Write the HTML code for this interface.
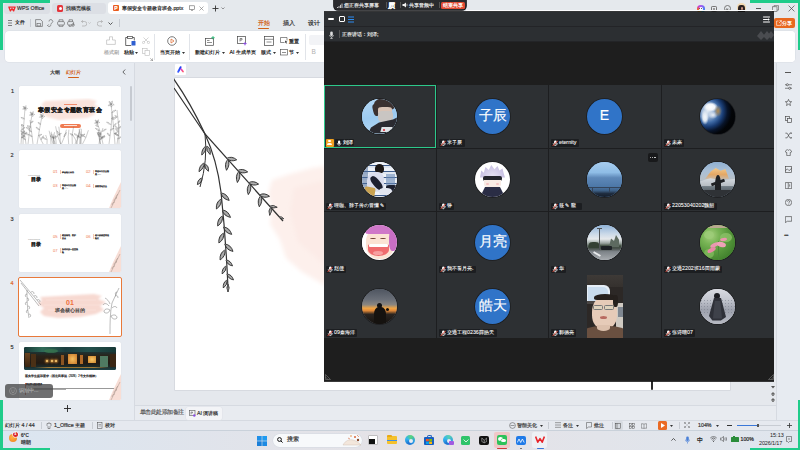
<!DOCTYPE html>
<html><head><meta charset="utf-8">
<style>
*{margin:0;padding:0;box-sizing:border-box}
html,body{width:800px;height:450px;overflow:hidden;background:#e7eaf0;font-family:"Liberation Sans",sans-serif;color:#333}
.a{position:absolute}
.t{position:absolute;white-space:nowrap;line-height:1;-webkit-text-stroke-width:0.18px}
</style></head><body>
<!-- title bar -->
<div class="a" style="left:0;top:0;width:800px;height:31px;background:#e5e9ed"></div>
<!-- ribbon panel -->
<div class="a" style="left:5px;top:31px;width:790px;height:31px;background:#fff;border-radius:4px;box-shadow:0 0 0 0.6px #d9dde4"></div>
<!-- left panel -->
<div class="a" style="left:0;top:63px;width:135px;height:357px;background:#e7ebf1;border-right:1px solid #d6dae1"></div>
<!-- canvas -->
<div class="a" style="left:135px;top:63px;width:641px;height:342px;background:#e5e8ed"></div>
<!-- slide -->
<div class="a" style="left:174.5px;top:77.5px;width:555.5px;height:312.5px;background:#fff;box-shadow:0 0 0 0.6px #cdd1d8"></div>
<!-- notes -->
<div class="a" style="left:135px;top:405px;width:641px;height:15px;background:#e8ebf0;border-top:1px solid #d6dae1"></div>
<!-- right sidebar -->
<div class="a" style="left:776px;top:63px;width:24px;height:357px;background:#e7ebf1;border-left:1px solid #d6dae1"></div>
<!-- status bar -->
<div class="a" style="left:0;top:420px;width:800px;height:10px;background:#e6e9ef;border-top:1px solid #d6dae1"></div>
<!-- taskbar -->
<div class="a" style="left:0;top:430px;width:800px;height:20px;background:linear-gradient(90deg,#dbe6f1,#e5e2e6 50%,#dfe6ee);border-top:1px solid #c9d1da"></div>
<!-- ===== title bar ===== -->
<div class="a" style="left:4px;top:3px;width:46px;height:11px;background:#dcdfe5;border-radius:3px"></div>
<svg class="a" style="left:7.7px;top:5.5px" width="8" height="6" viewBox="0 0 8 6"><path d="M0.9 1.1 L2.4 4.9 L4 2.6 L5.6 4.9 L7.1 1.1 M0.9 1.1 H7.1" fill="none" stroke="#f0282a" stroke-width="1.35" stroke-linejoin="round" stroke-linecap="round"/></svg>
<div class="t" style="left:17px;top:6px;font-size:5.3px;color:#333">WPS Office</div>
<div class="a" style="left:52px;top:3px;width:54px;height:11px;background:#dcdfe5;border-radius:3px"></div>
<div class="a" style="left:57px;top:5px;width:6px;height:7px;background:#e5343a;border-radius:1.5px"></div>
<div class="a" style="left:58.5px;top:7px;width:3px;height:3px;background:#fff;border-radius:50%"></div>
<div class="t" style="left:66px;top:6px;font-size:5px;color:#333">找稿壳模板</div>
<div class="a" style="left:108px;top:2px;width:100px;height:12px;background:#fff;border-radius:3px"></div>
<div class="a" style="left:113px;top:5px;width:6px;height:6px;background:#ea5b1e;border-radius:1px"></div>
<div class="t" style="left:114.3px;top:5.8px;font-size:5px;color:#fff;font-weight:bold">P</div>
<div class="t" style="left:122px;top:6px;font-size:5.2px;color:#222">寒假安全专题教育班会.pptx</div>
<svg class="a" style="left:189px;top:5px" width="6" height="6" viewBox="0 0 6 6"><rect x="0.5" y="0.8" width="5" height="3.6" fill="none" stroke="#666" stroke-width="0.6"/><path d="M2 5.4h2" stroke="#666" stroke-width="0.6"/></svg>
<svg class="a" style="left:199px;top:5.5px" width="5" height="5" viewBox="0 0 5 5"><path d="M0.5 0.5L4.5 4.5M4.5 0.5L0.5 4.5" stroke="#777" stroke-width="0.6"/></svg>
<svg class="a" style="left:212px;top:5px" width="7" height="7" viewBox="0 0 7 7"><path d="M3.5 0.5v6M0.5 3.5h6" stroke="#333" stroke-width="0.9"/></svg>
<svg class="a" style="left:221px;top:7px" width="4" height="3" viewBox="0 0 4 3"><path d="M0.5 0.5L2 2L3.5 0.5" fill="none" stroke="#555" stroke-width="0.6"/></svg>
<!-- right title icons -->
<div class="a" style="left:697px;top:5px;width:7.5px;height:7.5px;border-radius:50%;background:conic-gradient(#a35cf0,#4a7cf5 25%,#38c0e0 40%,#f5b02a 60%,#f05a3a 75%,#c040e0 90%,#a35cf0)"></div>
<div class="a" style="left:698.5px;top:6.5px;width:4.5px;height:4.5px;border-radius:50%;background:#fff"></div>
<div class="a" style="left:699.3px;top:8.2px;width:1.1px;height:1.1px;border-radius:50%;background:#333"></div>
<div class="a" style="left:701.3px;top:8.2px;width:1.1px;height:1.1px;border-radius:50%;background:#333"></div>
<div class="a" style="left:710.5px;top:5.5px;width:6px;height:6.5px;border:0.9px solid #777;border-radius:1.2px"></div>
<div class="a" style="left:712.5px;top:7.5px;width:2px;height:2.5px;background:#999"></div>
<div class="a" style="left:724px;top:5px;width:7px;height:7px;border:0.9px solid #777;border-radius:50%"></div>
<div class="a" style="left:726.3px;top:7.5px;width:2.4px;height:1.5px;border-bottom:0.7px solid #777;border-left:0.7px solid #777;transform:rotate(-45deg)"></div>
<div class="a" style="left:736.5px;top:3px;width:9.5px;height:9.5px;border-radius:50%;background:#f3d9b0"></div>
<div class="a" style="left:738px;top:5px;width:6.5px;height:7.5px;border-radius:45% 45% 20% 20%;background:#2a2020"></div>
<div class="a" style="left:740.5px;top:6.5px;width:2.5px;height:3px;border-radius:50%;background:#c89080"></div>
<div class="a" style="left:756px;top:8px;width:5px;height:0.7px;background:#555"></div>
<svg class="a" style="left:772px;top:5px" width="7" height="7" viewBox="0 0 7 7"><rect x="0.5" y="1.8" width="4.5" height="4.5" fill="none" stroke="#555" stroke-width="0.6"/><path d="M2 1.8V0.6h4.5v4.5H5" fill="none" stroke="#555" stroke-width="0.6"/></svg>
<svg class="a" style="left:788px;top:5px" width="7" height="7" viewBox="0 0 7 7"><path d="M0.6 0.6L6.4 6.4M6.4 0.6L0.6 6.4" stroke="#444" stroke-width="0.7"/></svg>

<!-- ===== quick toolbar ===== -->
<svg class="a" style="left:8px;top:20px" width="4" height="6" viewBox="0 0 4 6"><path d="M0 0.5h4M0 3h4M0 5.5h4" stroke="#333" stroke-width="0.6"/></svg>
<div class="t" style="left:15px;top:20px;font-size:5.4px;color:#222">文件</div>
<div class="a" style="left:30px;top:19px;width:0.6px;height:8px;background:#c8ccd3"></div>
<svg class="a" style="left:35px;top:19px" width="8" height="8" viewBox="0 0 8 8"><path d="M0.6 0.6h5l1.8 1.8v5h-6.8z" fill="none" stroke="#555" stroke-width="0.6"/><rect x="2" y="4.5" width="3.5" height="2.5" fill="none" stroke="#555" stroke-width="0.55"/></svg>
<svg class="a" style="left:46px;top:19px" width="8" height="8" viewBox="0 0 8 8"><path d="M2.5 5.5L1 7M3 2.5a1.8 1.8 0 0 1 3-1.5 1.8 1.8 0 0 1 0 2.8L4.5 5.3M5 5.5a1.8 1.8 0 0 1-3 1.5" fill="none" stroke="#555" stroke-width="0.6"/></svg>
<svg class="a" style="left:57px;top:19px" width="8" height="8" viewBox="0 0 8 8"><rect x="0.6" y="2.6" width="6.8" height="3.4" rx="1" fill="none" stroke="#555" stroke-width="0.6"/><path d="M2 2.6V0.8h4v1.8M2 6v1.3h4V6" fill="none" stroke="#555" stroke-width="0.6"/></svg>
<svg class="a" style="left:67px;top:19px" width="8" height="8" viewBox="0 0 8 8"><rect x="0.6" y="2.6" width="6" height="3.4" rx="1" fill="none" stroke="#555" stroke-width="0.6"/><path d="M2 2.6V0.8h3.5v1.8M2 6v1.3h2.5" fill="none" stroke="#555" stroke-width="0.6"/><circle cx="6" cy="6" r="1.3" fill="none" stroke="#555" stroke-width="0.55"/></svg>
<svg class="a" style="left:80px;top:19.5px" width="7" height="7" viewBox="0 0 7 7"><path d="M1.5 1.5h3a2 2 0 0 1 0 4.5H2M1.5 1.5L3 0.3M1.5 1.5L3 2.8" fill="none" stroke="#aaa" stroke-width="0.7"/></svg>
<svg class="a" style="left:88px;top:22px" width="3" height="2" viewBox="0 0 3 2"><path d="M0.3 0.3L1.5 1.6L2.7 0.3" fill="none" stroke="#aaa" stroke-width="0.5"/></svg>
<svg class="a" style="left:97px;top:19.5px" width="7" height="7" viewBox="0 0 7 7"><path d="M5.5 1.5h-3a2 2 0 0 0 0 4.5H5M5.5 1.5L4 0.3M5.5 1.5L4 2.8" fill="none" stroke="#aaa" stroke-width="0.7"/></svg>
<svg class="a" style="left:108px;top:21.5px" width="5" height="3" viewBox="0 0 5 3"><path d="M0.5 0.5L2.5 2.5L4.5 0.5" fill="none" stroke="#333" stroke-width="0.8"/></svg>
<div class="a" style="left:119px;top:19px;width:0.6px;height:8px;background:#c8ccd3"></div>

<!-- ribbon tabs -->
<div class="t" style="left:258px;top:20.5px;font-size:5.5px;color:#d2601a">开始</div>
<div class="a" style="left:258px;top:27.5px;width:11px;height:1.2px;background:#d2601a;border-radius:1px"></div>
<div class="t" style="left:282.5px;top:20.5px;font-size:5.5px;color:#333">插入</div>
<div class="t" style="left:307.5px;top:20.5px;font-size:5.5px;color:#333">设计</div>

<!-- ===== ribbon content ===== -->
<svg class="a" style="left:106px;top:36px" width="10" height="9" viewBox="0 0 10 9"><path d="M3.5 4V0.8h3V4h2.8v4.4H0.6V4z" fill="none" stroke="#bbb" stroke-width="0.7"/></svg>
<div class="t" style="left:104px;top:49.5px;font-size:5.3px;color:#aaa">格式刷</div>
<svg class="a" style="left:125px;top:36px" width="11" height="10" viewBox="0 0 11 10"><path d="M2.5 1.5H0.7v8h5.5M7.5 1.5h1.8v3" fill="none" stroke="#444" stroke-width="0.8"/><rect x="2.5" y="0.5" width="5" height="2" fill="none" stroke="#444" stroke-width="0.7"/><rect x="6.5" y="5" width="4" height="4.5" rx="0.5" fill="#2f5fd0"/></svg>
<div class="t" style="left:124px;top:49.5px;font-size:5.3px;color:#222">粘贴</div>
<svg class="a" style="left:134.5px;top:51.5px" width="3" height="2" viewBox="0 0 3 2"><path d="M0 0h3L1.5 2z" fill="#333"/></svg>
<svg class="a" style="left:142px;top:37px" width="8" height="7" viewBox="0 0 8 7"><path d="M1.5 0.5L6 5M6.5 0.5L2 5" stroke="#bbb" stroke-width="0.6"/><circle cx="1.5" cy="5.5" r="1.1" fill="none" stroke="#bbb" stroke-width="0.6"/><circle cx="6.5" cy="5.5" r="1.1" fill="none" stroke="#bbb" stroke-width="0.6"/></svg>
<svg class="a" style="left:142px;top:48px" width="8" height="8" viewBox="0 0 8 8"><rect x="0.6" y="0.6" width="4.5" height="5" fill="none" stroke="#bbb" stroke-width="0.6"/><rect x="3" y="2.5" width="4.4" height="5" fill="#fff" stroke="#bbb" stroke-width="0.6"/></svg>
<svg class="a" style="left:150px;top:58px" width="3" height="3" viewBox="0 0 3 3"><path d="M0.3 0.3L2.7 2.7M2.7 0.3V2.7H0.3" fill="none" stroke="#666" stroke-width="0.5"/></svg>
<div class="a" style="left:154px;top:34px;width:0.6px;height:26px;background:#e1e4e9"></div>
<svg class="a" style="left:167px;top:36px" width="10" height="10" viewBox="0 0 10 10"><circle cx="5" cy="5" r="4.3" fill="none" stroke="#444" stroke-width="0.7"/><path d="M4 3v4l3-2z" fill="none" stroke="#e0662a" stroke-width="0.7"/></svg>
<div class="t" style="left:160px;top:49.5px;font-size:5.3px;color:#222">当页开始</div>
<svg class="a" style="left:181.5px;top:51.5px" width="3" height="2" viewBox="0 0 3 2"><path d="M0 0h3L1.5 2z" fill="#333"/></svg>
<div class="a" style="left:189px;top:34px;width:0.6px;height:26px;background:#e1e4e9"></div>
<svg class="a" style="left:205px;top:36px" width="10" height="10" viewBox="0 0 10 10"><rect x="0.6" y="2.5" width="8" height="6.8" fill="none" stroke="#444" stroke-width="0.7"/><path d="M2 6.5h5M2 4.5h2.5" stroke="#444" stroke-width="0.6"/><path d="M8 0v3.4M6.3 1.7h3.4" stroke="#1bb36b" stroke-width="0.8"/></svg>
<div class="t" style="left:195px;top:49.5px;font-size:5.3px;color:#222">新建幻灯片</div>
<svg class="a" style="left:221.5px;top:51.5px" width="3" height="2" viewBox="0 0 3 2"><path d="M0 0h3L1.5 2z" fill="#333"/></svg>
<svg class="a" style="left:237px;top:36px" width="11" height="10" viewBox="0 0 11 10"><rect x="0.6" y="0.6" width="8" height="7" fill="none" stroke="#444" stroke-width="0.7"/><path d="M3 2.5v3M3 2.5h2v1.5H3" fill="none" stroke="#444" stroke-width="0.6"/><path d="M8 5.5l0.6 1.6 1.6 0.6-1.6 0.6L8 10 7.4 8.3 5.8 7.7l1.6-0.6z" fill="#8b4fe0"/></svg>
<div class="t" style="left:229.5px;top:49.5px;font-size:5.3px;color:#222">AI 生成单页</div>
<svg class="a" style="left:263.5px;top:36px" width="10" height="10" viewBox="0 0 10 10"><rect x="0.6" y="0.6" width="8.8" height="8.8" fill="none" stroke="#444" stroke-width="0.7"/><path d="M0.6 3.3h8.8M2.5 6h5" stroke="#444" stroke-width="0.6"/></svg>
<div class="t" style="left:261px;top:49.5px;font-size:5.3px;color:#222">版式</div>
<svg class="a" style="left:272.5px;top:51.5px" width="3" height="2" viewBox="0 0 3 2"><path d="M0 0h3L1.5 2z" fill="#333"/></svg>
<svg class="a" style="left:280px;top:37px" width="8" height="7" viewBox="0 0 8 7"><path d="M4.5 5.5H0.5v-5h6.5v3" fill="none" stroke="#444" stroke-width="0.6"/><path d="M5 3.5l2.5 1.2-1.1 0.4 0.8 1.3-0.5 0.3-0.8-1.3-0.8 0.8z" fill="#444"/></svg>
<div class="t" style="left:289px;top:38.5px;font-size:5.3px;color:#222">重置</div>
<svg class="a" style="left:280px;top:48.5px" width="8" height="7" viewBox="0 0 8 7"><rect x="0.5" y="0.5" width="7" height="5.5" fill="none" stroke="#444" stroke-width="0.6"/><path d="M2 3.5h4" stroke="#444" stroke-width="0.6"/></svg>
<div class="t" style="left:289px;top:49.5px;font-size:5.3px;color:#222">节</div>
<svg class="a" style="left:296px;top:51.5px" width="3" height="2" viewBox="0 0 3 2"><path d="M0 0h3L1.5 2z" fill="#333"/></svg>
<div class="a" style="left:305px;top:34px;width:0.6px;height:26px;background:#e1e4e9"></div>
<div class="a" style="left:309px;top:35px;width:30px;height:10px;background:#f2f3f6;border-radius:2px"></div>
<div class="t" style="left:311.5px;top:49px;font-size:6.5px;color:#b0b0b0;-webkit-text-stroke-width:0">B</div>

<!-- right: share button & panel -->
<div class="a" style="left:774px;top:18px;width:20.5px;height:9.5px;background:#e8681f;border-radius:2px"></div>
<svg class="a" style="left:775.5px;top:20px" width="6" height="6" viewBox="0 0 6 6"><path d="M2.5 1H0.6v4.4h4.4V3.5M3 3L5.4 0.6M3.5 0.6h1.9v1.9" fill="none" stroke="#fff" stroke-width="0.6"/></svg>
<div class="t" style="left:782px;top:20.5px;font-size:5.3px;color:#fff">分享</div>
<!-- ===== left panel ===== -->
<div class="t" style="left:50px;top:69.5px;font-size:5.3px;color:#333">大纲</div>
<div class="t" style="left:66px;top:69.5px;font-size:5.3px;color:#d2601a">幻灯片</div>
<div class="a" style="left:68px;top:76.5px;width:10.5px;height:1.2px;background:#d2601a;border-radius:1px"></div>
<svg class="a" style="left:122px;top:69px" width="4" height="6" viewBox="0 0 4 6"><path d="M3.2 0.5L0.9 3L3.2 5.5" fill="none" stroke="#444" stroke-width="0.8"/></svg>
<div class="a" style="left:129.5px;top:86px;width:2px;height:35px;background:#c6cad1;border-radius:1px"></div>
<!-- numbers -->
<div class="t" style="left:11px;top:89px;font-size:5.5px;color:#333">1</div>
<div class="t" style="left:10.5px;top:153px;font-size:5.5px;color:#333">2</div>
<div class="t" style="left:10.5px;top:217px;font-size:5.5px;color:#333">3</div>
<div class="t" style="left:10.5px;top:281px;font-size:5.5px;color:#e0662a">4</div>
<div class="t" style="left:10.5px;top:345px;font-size:5.5px;color:#333">5</div>

<!-- slide 1 -->
<div class="a" style="left:19px;top:86px;width:102px;height:58px;background:#fff;border-radius:1.5px;overflow:hidden;box-shadow:0 0 1px rgba(0,0,0,0.12)">
  <svg class="a" style="left:20px;top:12px" width="62" height="23" viewBox="0 0 62 23"><defs><filter id="bb1"><feGaussianBlur stdDeviation="0.8"/></filter></defs><path d="M6 3 L50 1 L58 3 L55 6 L60 9 L52 12 L57 16 L48 20 L20 22 L8 19 L3 15 L7 11 L2 7z" fill="#f9e3dc" filter="url(#bb1)"/></svg>
  <div class="a" style="left:45px;top:18px;width:13px;height:1.2px;background:#f08a6a"></div>
  <div class="t" style="left:19px;top:21.2px;font-size:6.4px;font-weight:bold;color:#1a1a1a;letter-spacing:0.4px;font-family:'Liberation Serif',serif">寒假安全专题教育班会</div>
  <div class="a" style="left:41px;top:37.5px;width:21px;height:4.2px;background:#ef7b52;border-radius:2px"></div><div class="a" style="left:45px;top:39.3px;width:13px;height:0.6px;background:#fde0d5"></div>
  <svg class="a" style="left:0;top:0" width="102" height="58" viewBox="0 0 102 58"><path d="M4.0 58.0 Q4.3 40.0 6.0 22.0 M4.6 47.2Q3.9 45.1 1.7 44.8Q2.4 46.9 4.6 47.2 M5.0 40.0Q3.9 38.3 2.0 38.9Q3.1 40.6 5.0 40.0 M5.4 32.8Q4.1 31.0 1.9 31.5Q3.2 33.3 5.4 32.8 M6.0 22.0Q7.1 23.4 8.5 22.5Q7.5 21.1 6.0 22.0M6.0 22.0Q5.3 23.6 6.8 24.4Q7.5 22.9 6.0 22.0M6.0 22.0Q4.3 21.6 3.7 23.2Q5.4 23.6 6.0 22.0M6.0 22.0Q5.7 20.3 4.0 20.4Q4.3 22.1 6.0 22.0M6.0 22.0Q7.5 21.2 6.9 19.6Q5.4 20.4 6.0 22.0 M9.0 58.0 Q10.7 43.0 13.0 28.0 M10.2 49.0Q8.3 47.0 5.6 47.3Q7.5 49.3 10.2 49.0 M11.0 43.0Q9.5 41.2 7.1 41.6Q8.6 43.4 11.0 43.0 M11.8 37.0Q13.8 36.9 14.2 35.0Q12.2 35.1 11.8 37.0 M13.0 28.0Q14.1 29.5 15.7 28.5Q14.6 27.1 13.0 28.0M13.0 28.0Q12.2 29.6 13.7 30.6Q14.5 29.0 13.0 28.0M13.0 28.0Q11.2 27.5 10.6 29.3Q12.4 29.7 13.0 28.0M13.0 28.0Q13.0 26.2 11.1 26.0Q11.2 27.8 13.0 28.0M13.0 28.0Q14.7 27.4 14.3 25.6Q12.6 26.2 13.0 28.0 M14.0 58.0 Q12.7 46.0 11.0 34.0 M13.1 50.8Q12.6 48.9 10.6 48.7Q11.1 50.7 13.1 50.8 M12.5 46.0Q11.8 43.9 9.6 43.6Q10.3 45.7 12.5 46.0 M11.9 41.2Q10.4 39.4 8.0 39.8Q9.5 41.6 11.9 41.2 M2.0 58.0 Q3.0 48.0 3.0 38.0 M2.3 52.0Q4.7 51.5 5.6 49.2Q3.2 49.7 2.3 52.0 M2.5 48.0Q5.0 47.5 6.0 45.1Q3.5 45.6 2.5 48.0 M2.7 44.0Q5.1 43.6 5.9 41.3Q3.5 41.7 2.7 44.0 M18.0 58.0 Q20.3 44.0 23.0 30.0 M19.5 49.6Q21.6 50.1 22.8 48.4Q20.7 47.9 19.5 49.6 M20.5 44.0Q19.6 41.7 17.1 41.2Q18.0 43.5 20.5 44.0 M21.5 38.4Q21.1 36.5 19.1 36.4Q19.5 38.3 21.5 38.4 M23.0 30.0Q24.2 31.5 25.8 30.5Q24.6 29.0 23.0 30.0M23.0 30.0Q22.0 31.6 23.5 32.7Q24.5 31.1 23.0 30.0M23.0 30.0Q21.2 29.5 20.5 31.3Q22.3 31.8 23.0 30.0M23.0 30.0Q23.0 28.1 21.1 27.9Q21.1 29.8 23.0 30.0M23.0 30.0Q24.7 29.1 23.9 27.4Q22.3 28.3 23.0 30.0 M7.0 58.0 Q6.0 51.0 5.0 44.0 M6.4 53.8Q5.4 51.4 2.9 50.9Q3.9 53.3 6.4 53.8 M6.0 51.0Q4.9 48.5 2.3 47.9Q3.4 50.4 6.0 51.0 M5.6 48.2Q7.6 48.1 8.0 46.2Q6.0 46.3 5.6 48.2 M61.4 58.0 Q63.4 50.4 62.3 42.8 M61.9 50.4Q64.5 50.3 66.0 48.0Q63.3 48.2 61.9 50.4 M56.0 58.0 Q59.8 52.3 60.0 46.5 M58.0 52.3Q59.8 51.5 59.6 49.5Q57.7 50.3 58.0 52.3 M63.5 58.0 Q67.7 51.1 69.4 44.2 M66.5 51.1Q64.6 48.7 61.5 48.3Q63.4 50.7 66.5 51.1 M41.5 58.0 Q41.1 49.4 39.8 40.7 M40.6 49.4Q40.4 46.5 38.0 44.8Q38.3 47.7 40.6 49.4 M28.0 58.0 Q28.9 53.5 26.7 49.0 M27.4 53.5Q26.1 51.4 23.7 51.4Q24.9 53.5 27.4 53.5 M37.2 58.0 Q37.0 54.2 36.4 50.4 M81.2 58.0 Q79.4 50.9 79.7 43.8 M80.4 50.9Q80.6 48.7 78.6 47.7Q78.5 49.9 80.4 50.9 M34.5 58.0 Q34.1 52.1 35.5 46.2 M35.0 52.1Q33.6 49.9 31.0 49.8Q32.4 52.0 35.0 52.1 M57.8 58.0 Q57.0 53.1 53.3 48.2 M60.6 58.0 Q61.8 50.6 60.1 43.1 M62.2 58.0 Q61.2 51.6 61.0 45.3 M61.6 51.6Q60.8 49.8 58.8 50.1Q59.6 51.9 61.6 51.6 M24.2 58.0 Q21.5 53.7 20.1 49.5 M22.1 53.7Q24.4 52.3 24.5 49.7Q22.3 51.1 22.1 53.7 M53.3 58.0 Q52.2 49.3 54.6 40.6 M54.0 49.3Q53.1 47.4 51.0 47.6Q51.9 49.5 54.0 49.3 M35.6 58.0 Q33.3 52.9 34.0 47.8 M81.6 58.0 Q79.8 52.2 81.4 46.4 M81.5 52.2Q84.3 51.9 86.0 49.6Q83.1 49.9 81.5 52.2 M49.7 58.0 Q48.6 50.8 49.9 43.7 M42.4 58.0 Q45.9 50.9 47.4 43.7 M44.9 50.9Q47.2 49.3 47.5 46.5Q45.1 48.1 44.9 50.9 M36.2 58.0 Q35.3 52.8 32.2 47.6 M34.2 52.8Q36.9 52.6 38.4 50.3Q35.7 50.5 34.2 52.8 M58.0 58.0 Q58.4 50.3 61.1 42.5 M59.6 50.3Q57.9 47.9 55.0 47.7Q56.7 50.0 59.6 50.3 M34.1 58.0 Q31.3 51.9 32.3 45.8 M33.2 51.9Q35.7 51.8 37.0 49.7Q34.5 49.8 33.2 51.9 M32.0 58.0 Q32.3 51.4 30.1 44.7 M41.7 58.0 Q37.6 49.2 36.6 40.3 M39.2 49.2Q41.3 49.3 42.3 47.3Q40.1 47.2 39.2 49.2 M96.0 58.0 Q94.5 38.0 92.0 18.0 M95.0 48.0Q97.4 48.1 98.4 46.0Q96.1 45.9 95.0 48.0 M94.3 40.8Q96.8 39.9 97.2 37.3Q94.8 38.2 94.3 40.8 M93.6 33.6Q96.2 33.6 97.6 31.3Q94.9 31.3 93.6 33.6 M92.8 26.4Q95.6 26.3 97.0 24.0Q94.3 24.1 92.8 26.4 M92.0 18.0Q93.2 19.9 95.2 18.8Q94.0 17.0 92.0 18.0M92.0 18.0Q90.8 19.8 92.5 21.2Q93.7 19.4 92.0 18.0M92.0 18.0Q89.8 17.6 89.2 19.8Q91.4 20.1 92.0 18.0M92.0 18.0Q92.1 15.8 90.0 15.4Q89.8 17.6 92.0 18.0M92.0 18.0Q94.0 17.1 93.4 15.0Q91.3 15.9 92.0 18.0 M90.0 58.0 Q92.7 42.0 93.0 26.0 M90.8 50.0Q90.5 47.7 88.2 47.0Q88.5 49.3 90.8 50.0 M91.3 44.2Q93.9 44.3 95.1 42.0Q92.6 42.0 91.3 44.2 M91.8 38.5Q90.3 36.1 87.5 36.0Q89.0 38.4 91.8 38.5 M92.4 32.7Q94.4 33.0 95.2 31.1Q93.1 30.8 92.4 32.7 M100.0 58.0 Q100.6 41.0 98.0 24.0 M99.5 49.5Q98.3 47.3 95.8 47.4Q97.0 49.6 99.5 49.5 M99.1 43.4Q98.7 40.9 96.4 40.1Q96.8 42.6 99.1 43.4 M98.8 37.3Q100.8 36.8 100.9 34.7Q98.8 35.2 98.8 37.3 M98.4 31.1Q97.8 29.3 95.8 29.6Q96.5 31.5 98.4 31.1 M84.0 58.0 Q82.2 47.0 78.0 36.0 M82.5 52.5Q84.9 52.6 86.0 50.5Q83.6 50.4 82.5 52.5 M81.4 48.5Q80.4 46.4 78.1 46.6Q79.1 48.7 81.4 48.5 M80.3 44.6Q79.0 42.3 76.3 42.3Q77.7 44.5 80.3 44.6 M79.3 40.6Q78.6 38.7 76.6 39.1Q77.3 41.0 79.3 40.6 M78.0 36.0Q79.1 37.4 80.7 36.5Q79.5 35.0 78.0 36.0M78.0 36.0Q76.8 37.4 78.1 38.7Q79.3 37.3 78.0 36.0M78.0 36.0Q76.2 35.6 75.6 37.3Q77.4 37.7 78.0 36.0M78.0 36.0Q78.0 34.2 76.1 34.0Q76.2 35.8 78.0 36.0M78.0 36.0Q79.8 35.6 79.5 33.8Q77.8 34.2 78.0 36.0 M80.0 58.0 Q80.2 50.0 84.0 42.0 M81.0 54.0Q83.5 53.0 84.1 50.3Q81.5 51.3 81.0 54.0 M81.7 51.1Q81.2 48.5 78.7 47.6Q79.2 50.2 81.7 51.1 M82.4 48.2Q81.3 46.1 78.9 46.2Q80.0 48.3 82.4 48.2 M83.2 45.4Q85.9 45.3 87.3 43.0Q84.6 43.0 83.2 45.4 M98.0 58.0 Q100.1 48.0 100.0 38.0 M98.5 53.0Q101.1 53.0 102.4 50.7Q99.8 50.7 98.5 53.0 M98.9 49.4Q98.1 47.4 96.0 47.7Q96.8 49.7 98.9 49.4 M99.2 45.8Q98.9 43.3 96.5 42.6Q96.9 45.0 99.2 45.8 M99.6 42.2Q102.0 42.3 103.1 40.1Q100.7 40.0 99.6 42.2" fill="none" stroke="#6a6a6a" stroke-width="0.34"/></svg>
</div>

<!-- slide 2 -->
<div class="a" style="left:19px;top:150px;width:102px;height:58px;background:#fff;border-radius:1.5px;overflow:hidden;box-shadow:0 0 1px rgba(0,0,0,0.12)">
  <div class="t" style="left:9px;top:23.5px;font-size:2.2px;color:#999;-webkit-text-stroke-width:0">CONTENTS</div>
  <div class="t" style="left:12px;top:27px;font-size:5px;font-weight:bold;color:#222">目录</div>
  <div class="t" style="left:34px;top:20px;font-size:4.2px;color:#f2906f;-webkit-text-stroke-width:0.05px">01</div>
  <div class="a" style="left:41px;top:20px;width:0.3px;height:4px;background:#f3c5b5"></div>
  <div class="t" style="left:43px;top:21.2px;font-size:2.2px;color:#333">班会核心目的</div>
  <div class="t" style="left:67px;top:20px;font-size:4.2px;color:#f2906f;-webkit-text-stroke-width:0.05px">02</div>
  <div class="a" style="left:74px;top:20px;width:0.3px;height:4px;background:#f3c5b5"></div>
  <div class="t" style="left:76px;top:19.5px;font-size:2.2px;color:#333">寒假出行安全隐</div>
  <div class="t" style="left:76px;top:22.8px;font-size:2.2px;color:#333">患 <span style="color:#aaa">(一)</span></div>
  <div class="t" style="left:34px;top:34px;font-size:4.2px;color:#f2906f;-webkit-text-stroke-width:0.05px">03</div>
  <div class="a" style="left:41px;top:34px;width:0.3px;height:4px;background:#f3c5b5"></div>
  <div class="t" style="left:43px;top:33.5px;font-size:2.2px;color:#333">寒假出行安全隐</div>
  <div class="t" style="left:43px;top:36.8px;font-size:2.2px;color:#333">患 <span style="color:#aaa">(二)</span></div>
  <div class="t" style="left:67px;top:34px;font-size:4.2px;color:#f2906f;-webkit-text-stroke-width:0.05px">04</div>
  <div class="a" style="left:74px;top:34px;width:0.3px;height:4px;background:#f3c5b5"></div>
  <div class="t" style="left:76px;top:35.2px;font-size:2.2px;color:#333">居家用电安全</div>
  <svg class="a" style="left:88px;top:32px" width="14" height="26" viewBox="0 0 14 26"><path d="M14 0 C10 8 6 16 2 26 L14 26z" fill="#f8ded6"/><path d="M13 8 C10 14 7 20 4 26 M10 16 c-2 0-3 1-3 3 M8 20 c-2 0-3 1-3 3 M11 12 c-1 1-2 2-2 4" fill="none" stroke="#8a7a70" stroke-width="0.4"/></svg>
</div>

<!-- slide 3 -->
<div class="a" style="left:19px;top:214px;width:102px;height:58px;background:#fff;border-radius:1.5px;overflow:hidden;box-shadow:0 0 1px rgba(0,0,0,0.12)">
  <div class="t" style="left:9px;top:24px;font-size:2.2px;color:#999;-webkit-text-stroke-width:0">CONTENTS</div>
  <div class="t" style="left:12px;top:27.5px;font-size:5px;font-weight:bold;color:#222">目录</div>
  <div class="t" style="left:34px;top:20.5px;font-size:4.2px;color:#f2906f;-webkit-text-stroke-width:0.05px">05</div>
  <div class="a" style="left:41px;top:20px;width:0.3px;height:4.5px;background:#f3c5b5"></div>
  <div class="t" style="left:43px;top:19.5px;font-size:2.2px;color:#333">燃放烟花、防护</div>
  <div class="t" style="left:43px;top:22.8px;font-size:2.2px;color:#333">要点</div>
  <div class="t" style="left:67px;top:20.5px;font-size:4.2px;color:#f2906f;-webkit-text-stroke-width:0.05px">06</div>
  <div class="a" style="left:74px;top:20px;width:0.3px;height:4.5px;background:#f3c5b5"></div>
  <div class="t" style="left:76px;top:19.5px;font-size:2.2px;color:#333">做不到就远离危</div>
  <div class="t" style="left:76px;top:22.8px;font-size:2.2px;color:#333">险区</div>
  <div class="t" style="left:34px;top:34.5px;font-size:4.2px;color:#f2906f;-webkit-text-stroke-width:0.05px">07</div>
  <div class="a" style="left:41px;top:34px;width:0.3px;height:4.5px;background:#f3c5b5"></div>
  <div class="t" style="left:43px;top:33.5px;font-size:2.2px;color:#333">如何识别一些直接</div>
  <div class="t" style="left:43px;top:36.8px;font-size:2.2px;color:#333">险</div>
  <svg class="a" style="left:88px;top:32px" width="14" height="26" viewBox="0 0 14 26"><path d="M14 0 C10 8 6 16 2 26 L14 26z" fill="#f8ded6"/><path d="M13 8 C10 14 7 20 4 26 M10 16 c-2 0-3 1-3 3 M8 20 c-2 0-3 1-3 3 M11 12 c-1 1-2 2-2 4" fill="none" stroke="#8a7a70" stroke-width="0.4"/></svg>
</div>

<!-- slide 4 (selected) -->
<div class="a" style="left:18px;top:277px;width:104px;height:60px;border:1px solid #e8793a;border-radius:2px;background:#fff;overflow:hidden">
  <svg class="a" style="left:17px;top:14px" width="72" height="28" viewBox="0 0 72 28"><defs><filter id="bb4"><feGaussianBlur stdDeviation="0.9"/></filter></defs><path d="M4 5 L40 3 L58 2 L66 4 L62 7 L70 10 L64 14 L68 18 L60 22 L44 25 L22 26 L8 24 L4 20 L8 16 L2 12 L6 8z" fill="#f7d9d1" filter="url(#bb4)"/><path d="M10 8h50M8 13h56M12 18h48" stroke="#fbe8e3" stroke-width="0.6" opacity="0.7"/></svg>
  <div class="t" style="left:47px;top:20.5px;font-size:7px;font-weight:bold;color:#f0703c;-webkit-text-stroke-width:0">01</div>
  <div class="t" style="left:36px;top:30px;font-size:5.2px;color:#333">班会核心目的</div>
  <svg class="a" style="left:0;top:0" width="102" height="58" viewBox="0 0 102 58" fill="none" stroke="#555" stroke-width="0.4">
    <path d="M1 2 L22 27 M2 5 L20 28"/>
    <path d="M8 12 C8 20 8 30 10 40 M8 16 c-2 0-2 2-1 3 M8 20 c2 0 2 2 1 3 M8 24 c-2 0-2 2-1 3 M9 28 c2 0 2 2 1 3 M9 32 c-2 0-2 2-1 3 M10 36 c2 0 2 2 1 3"/>
    <path d="M12 14 c2-1 3 0 3 2 M15 18 c2-1 3 0 3 2 M18 22 c2-1 3 0 3 2"/>
    <path d="M91 56 C91 45 91 35 93 25 M93 25 L100 10 M96 18 c2-1 3 0 3 2 M98 14 c-2 0-2 2-1 3 M91 32 c-3-2-6-1-6 2 2 2 5 1 6-2z M92 38 c3-2 6-1 6 2-2 2-5 1-6-2z M90 28 c-2-3-5-3-6-1 M86 20 c2 1 4 3 5 6 M93 30 c2-2 4-2 5 0"/>
  </svg>
</div>

<!-- slide 5 -->
<div class="a" style="left:19px;top:342px;width:102px;height:58px;background:#fff;border-radius:1.5px;overflow:hidden;box-shadow:0 0 1px rgba(0,0,0,0.12)">
  <div class="a" style="left:5px;top:5px;width:92px;height:23px;border-radius:1.5px;overflow:hidden;background:linear-gradient(180deg,#132a2c 0,#1a3638 18%,#2a2218 40%,#231a12 70%,#1b2a2a 85%,#1f4448 100%)">
    <div class="a" style="left:0;top:0;width:92px;height:5px;background:linear-gradient(90deg,#173836,#2f6a58 20%,#1b3d3f 45%,#22504c 70%,#173836)"></div>
    <div class="a" style="left:20px;top:2px;width:14px;height:4px;background:#3a7a50;border-radius:50%;opacity:0.7"></div>
    <div class="a" style="left:1px;top:6px;width:5px;height:14px;background:linear-gradient(#6a4420,#3a2410)"></div>
    <div class="a" style="left:7px;top:7px;width:5px;height:13px;background:#4a3016"></div>
    <div class="a" style="left:22px;top:12.5px;width:2px;height:2.5px;background:#ffd27a;border-radius:1px;box-shadow:0 0 2px 1px rgba(255,170,60,0.7)"></div>
    <div class="a" style="left:26.5px;top:12.5px;width:2px;height:2.5px;background:#ffd27a;border-radius:1px;box-shadow:0 0 2px 1px rgba(255,170,60,0.7)"></div>
    <div class="a" style="left:31px;top:12.5px;width:2px;height:2.5px;background:#ffd27a;border-radius:1px;box-shadow:0 0 2px 1px rgba(255,170,60,0.7)"></div>
    <div class="a" style="left:37px;top:8px;width:3px;height:10px;background:#8a5422"></div>
    <div class="a" style="left:44px;top:7px;width:9px;height:10px;background:radial-gradient(#f6c060,#c8782a)"></div>
    <div class="a" style="left:56px;top:8px;width:3px;height:9px;background:#b06a28"></div>
    <div class="a" style="left:64px;top:9px;width:8px;height:7px;background:radial-gradient(#f8c868,#d08830)"></div>
    <div class="a" style="left:76px;top:9px;width:8px;height:11px;background:#4f7a62"></div>
    <div class="a" style="left:86px;top:7px;width:6px;height:13px;background:#3a2614"></div>
    <div class="a" style="left:10px;top:20px;width:75px;height:1.2px;background:linear-gradient(90deg,transparent,#d89a3a 20%,#c88a2a 50%,#d89a3a 80%,transparent);opacity:0.7"></div>
  </div>
  <div class="t" style="left:5.5px;top:34px;font-size:2.6px;color:#333">落实学生提和要求（西北民事说〔2026〕2号文件精神）</div>
  <div class="t" style="left:6.5px;top:41.5px;font-size:2.4px;font-weight:bold;color:#222">学生学习提升要求</div>
  <div class="a" style="left:5.5px;top:41px;width:0.4px;height:12px;background:#c87050"></div>
  <div class="a" style="left:6.5px;top:45.8px;width:90px;height:0.5px;background:#999"></div>
  <div class="a" style="left:6.5px;top:47.2px;width:40px;height:0.5px;background:#aaa"></div>
  <svg class="a" style="left:88px;top:32px" width="14" height="26" viewBox="0 0 14 26"><path d="M14 0 C10 8 6 16 2 26 L14 26z" fill="#f8ded6"/><path d="M13 8 C10 14 7 20 4 26 M10 16 c-2 0-3 1-3 3 M8 20 c-2 0-3 1-3 3 M11 12 c-1 1-2 2-2 4" fill="none" stroke="#8a7a70" stroke-width="0.4"/></svg>
</div>
<svg class="a" style="left:64px;top:404.5px" width="7" height="7" viewBox="0 0 7 7"><path d="M3.5 0v7M0 3.5h7" stroke="#222" stroke-width="0.9"/></svg>
<!-- slide content -->
<svg class="a" style="left:174px;top:77px" width="160" height="313" viewBox="0 0 160 313"><defs><filter id="blur" x="-20%" y="-20%" width="140%" height="140%"><feGaussianBlur stdDeviation="2"/></filter></defs><path d="M152.0 89.0 L138.0 91.0 L116.0 97.0 L98.0 103.0 L94.0 117.0 L98.0 131.0 L96.0 147.0 L106.0 163.0 L112.0 181.0 L128.0 195.0 L152.0 209.0Z" fill="#fdf0ec" filter="url(#blur)"/><path d="M152.0 103.0 L120.0 111.0 L116.0 135.0 L124.0 165.0 L152.0 189.0Z" fill="#fbe5df" fill-opacity="0.45" filter="url(#blur)"/><path d="M-1.0 1.0 Q16.0 25.0 31.0 57.0 L109.0 144.0" fill="none" stroke="#333" stroke-width="1.3"/><path d="M0.0 11.0 L31.0 57.0 Q43.0 83.0 47.0 115.0 Q52.0 163.0 54.0 211.0" fill="none" stroke="#333" stroke-width="1.2"/><path d="M31.0 57.0 Q34.0 83.0 26.0 110.0" fill="none" stroke="#333" stroke-width="1.0"/><path d="M52.8 81.4 Q56.8 85.4 62.7 82.8 Q57.8 78.6 52.8 81.4Z" fill="#5a5a5a" fill-opacity="0.6" stroke="#333" stroke-width="0.95"/><path d="M52.8 81.4 L61.3 82.5" stroke="#fff" stroke-width="0.35" stroke-opacity="0.7"/><path d="M53.8 82.4 Q49.9 86.9 52.5 93.3 Q56.6 87.7 53.8 82.4Z" fill="#5a5a5a" fill-opacity="0.6" stroke="#333" stroke-width="0.95"/><path d="M53.8 82.4 L52.7 91.6" stroke="#fff" stroke-width="0.35" stroke-opacity="0.7"/><path d="M63.8 93.5 Q67.7 97.5 73.7 94.9 Q68.7 90.8 63.8 93.5Z" fill="#5a5a5a" fill-opacity="0.6" stroke="#333" stroke-width="0.95"/><path d="M63.8 93.5 L72.2 94.7" stroke="#fff" stroke-width="0.35" stroke-opacity="0.7"/><path d="M64.8 94.5 Q60.8 99.0 63.4 105.5 Q67.5 99.9 64.8 94.5Z" fill="#5a5a5a" fill-opacity="0.6" stroke="#333" stroke-width="0.95"/><path d="M64.8 94.5 L63.6 103.8" stroke="#fff" stroke-width="0.35" stroke-opacity="0.7"/><path d="M74.7 105.7 Q78.7 109.7 84.6 107.1 Q79.6 103.0 74.7 105.7Z" fill="#5a5a5a" fill-opacity="0.6" stroke="#333" stroke-width="0.95"/><path d="M74.7 105.7 L83.1 106.9" stroke="#fff" stroke-width="0.35" stroke-opacity="0.7"/><path d="M75.7 106.7 Q71.7 111.2 74.3 117.6 Q78.5 112.0 75.7 106.7Z" fill="#5a5a5a" fill-opacity="0.6" stroke="#333" stroke-width="0.95"/><path d="M75.7 106.7 L74.5 116.0" stroke="#fff" stroke-width="0.35" stroke-opacity="0.7"/><path d="M85.6 117.9 Q89.6 121.9 95.5 119.3 Q90.5 115.2 85.6 117.9Z" fill="#5a5a5a" fill-opacity="0.6" stroke="#333" stroke-width="0.95"/><path d="M85.6 117.9 L94.0 119.1" stroke="#fff" stroke-width="0.35" stroke-opacity="0.7"/><path d="M86.6 118.9 Q82.6 123.4 85.3 129.8 Q89.4 124.2 86.6 118.9Z" fill="#5a5a5a" fill-opacity="0.6" stroke="#333" stroke-width="0.95"/><path d="M86.6 118.9 L85.5 128.2" stroke="#fff" stroke-width="0.35" stroke-opacity="0.7"/><path d="M95.7 129.2 Q98.7 132.2 103.2 130.3 Q99.4 127.2 95.7 129.2Z" fill="#5a5a5a" fill-opacity="0.6" stroke="#333" stroke-width="0.95"/><path d="M95.7 129.2 L102.1 130.1" stroke="#fff" stroke-width="0.35" stroke-opacity="0.7"/><path d="M96.7 130.2 Q93.8 133.6 95.7 138.4 Q98.8 134.2 96.7 130.2Z" fill="#5a5a5a" fill-opacity="0.6" stroke="#333" stroke-width="0.95"/><path d="M96.7 130.2 L95.9 137.2" stroke="#fff" stroke-width="0.35" stroke-opacity="0.7"/><path d="M105.0 140.0 Q106.5 142.5 109.7 141.7 Q107.7 139.1 105.0 140.0Z" fill="#5a5a5a" fill-opacity="0.6" stroke="#333" stroke-width="0.95"/><path d="M105.0 140.0 L109.0 141.5" stroke="#fff" stroke-width="0.35" stroke-opacity="0.7"/><path d="M32.0 69.0 Q27.4 71.8 27.8 78.1 Q32.8 74.3 32.0 69.0Z" fill="#5a5a5a" fill-opacity="0.6" stroke="#333" stroke-width="0.95"/><path d="M32.0 69.0 L28.4 76.7" stroke="#fff" stroke-width="0.35" stroke-opacity="0.7"/><path d="M33.0 69.0 Q31.6 73.8 36.1 77.5 Q37.2 71.8 33.0 69.0Z" fill="#5a5a5a" fill-opacity="0.6" stroke="#333" stroke-width="0.95"/><path d="M33.0 69.0 L35.6 76.2" stroke="#fff" stroke-width="0.35" stroke-opacity="0.7"/><path d="M30.0 86.0 Q25.2 88.4 25.0 94.7 Q30.3 91.4 30.0 86.0Z" fill="#5a5a5a" fill-opacity="0.6" stroke="#333" stroke-width="0.95"/><path d="M30.0 86.0 L25.8 93.4" stroke="#fff" stroke-width="0.35" stroke-opacity="0.7"/><path d="M31.0 87.0 Q29.8 91.5 34.4 94.3 Q35.2 89.0 31.0 87.0Z" fill="#5a5a5a" fill-opacity="0.6" stroke="#333" stroke-width="0.95"/><path d="M31.0 87.0 L33.9 93.2" stroke="#fff" stroke-width="0.35" stroke-opacity="0.7"/><path d="M28.0 101.0 Q23.5 102.2 23.4 107.6 Q28.4 105.7 28.0 101.0Z" fill="#5a5a5a" fill-opacity="0.6" stroke="#333" stroke-width="0.95"/><path d="M28.0 101.0 L24.1 106.6" stroke="#fff" stroke-width="0.35" stroke-opacity="0.7"/><path d="M47.1 116.0 Q48.3 122.0 55.2 123.4 Q53.2 116.6 47.1 116.0Z" fill="#5a5a5a" fill-opacity="0.6" stroke="#333" stroke-width="0.95"/><path d="M47.1 116.0 L54.0 122.3" stroke="#fff" stroke-width="0.35" stroke-opacity="0.7"/><path d="M47.1 122.0 Q41.7 125.0 42.4 132.0 Q48.2 128.0 47.1 122.0Z" fill="#5a5a5a" fill-opacity="0.6" stroke="#333" stroke-width="0.95"/><path d="M47.1 122.0 L43.1 130.5" stroke="#fff" stroke-width="0.35" stroke-opacity="0.7"/><path d="M48.3 133.0 Q49.6 139.0 56.5 140.4 Q54.4 133.6 48.3 133.0Z" fill="#5a5a5a" fill-opacity="0.6" stroke="#333" stroke-width="0.95"/><path d="M48.3 133.0 L55.3 139.3" stroke="#fff" stroke-width="0.35" stroke-opacity="0.7"/><path d="M48.3 139.0 Q43.0 142.0 43.7 149.0 Q49.5 145.0 48.3 139.0Z" fill="#5a5a5a" fill-opacity="0.6" stroke="#333" stroke-width="0.95"/><path d="M48.3 139.0 L44.4 147.5" stroke="#fff" stroke-width="0.35" stroke-opacity="0.7"/><path d="M49.6 150.0 Q50.8 156.0 57.7 157.4 Q55.6 150.6 49.6 150.0Z" fill="#5a5a5a" fill-opacity="0.6" stroke="#333" stroke-width="0.95"/><path d="M49.6 150.0 L56.5 156.3" stroke="#fff" stroke-width="0.35" stroke-opacity="0.7"/><path d="M49.6 156.0 Q44.2 159.0 44.9 166.0 Q50.7 162.0 49.6 156.0Z" fill="#5a5a5a" fill-opacity="0.6" stroke="#333" stroke-width="0.95"/><path d="M49.6 156.0 L45.6 164.5" stroke="#fff" stroke-width="0.35" stroke-opacity="0.7"/><path d="M50.8 167.0 Q52.1 173.0 59.0 174.4 Q56.9 167.6 50.8 167.0Z" fill="#5a5a5a" fill-opacity="0.6" stroke="#333" stroke-width="0.95"/><path d="M50.8 167.0 L57.7 173.3" stroke="#fff" stroke-width="0.35" stroke-opacity="0.7"/><path d="M50.8 173.0 Q45.4 176.0 46.1 183.0 Q52.0 179.0 50.8 173.0Z" fill="#5a5a5a" fill-opacity="0.6" stroke="#333" stroke-width="0.95"/><path d="M50.8 173.0 L46.8 181.5" stroke="#fff" stroke-width="0.35" stroke-opacity="0.7"/><path d="M52.0 183.0 Q53.0 187.8 58.5 188.9 Q56.8 183.5 52.0 183.0Z" fill="#5a5a5a" fill-opacity="0.6" stroke="#333" stroke-width="0.95"/><path d="M52.0 183.0 L57.5 188.0" stroke="#fff" stroke-width="0.35" stroke-opacity="0.7"/><path d="M52.0 189.0 Q47.7 191.4 48.2 197.0 Q52.9 193.8 52.0 189.0Z" fill="#5a5a5a" fill-opacity="0.6" stroke="#333" stroke-width="0.95"/><path d="M52.0 189.0 L48.8 195.8" stroke="#fff" stroke-width="0.35" stroke-opacity="0.7"/><path d="M53.0 197.0 Q54.0 201.8 59.5 202.9 Q57.8 197.5 53.0 197.0Z" fill="#5a5a5a" fill-opacity="0.6" stroke="#333" stroke-width="0.95"/><path d="M53.0 197.0 L58.5 202.0" stroke="#fff" stroke-width="0.35" stroke-opacity="0.7"/><path d="M53.0 203.0 Q48.7 205.4 49.3 211.0 Q53.9 207.8 53.0 203.0Z" fill="#5a5a5a" fill-opacity="0.6" stroke="#333" stroke-width="0.95"/><path d="M53.0 203.0 L49.8 209.8" stroke="#fff" stroke-width="0.35" stroke-opacity="0.7"/><path d="M54.0 207.0 Q51.8 210.6 54.0 215.0 Q56.2 210.6 54.0 207.0Z" fill="#5a5a5a" fill-opacity="0.6" stroke="#333" stroke-width="0.95"/><path d="M54.0 207.0 L54.0 213.8" stroke="#fff" stroke-width="0.35" stroke-opacity="0.7"/></svg>
<div class="a" style="left:175px;top:64px;width:11px;height:11px;background:#fff;border-radius:1px"></div>
<svg class="a" style="left:176px;top:65px" width="9" height="9" viewBox="0 0 9 9"><defs><linearGradient id="ag" x1="0" y1="1" x2="1" y2="0"><stop offset="0" stop-color="#3b5bff"/><stop offset="1" stop-color="#1e3cf0"/></linearGradient><linearGradient id="pg" x1="0" y1="0" x2="1" y2="1"><stop offset="0" stop-color="#e040d0"/><stop offset="1" stop-color="#ff5a6a"/></linearGradient></defs><path d="M2.2 6.8L4.6 2.2" stroke="url(#ag)" stroke-width="1.9" stroke-linecap="round"/><path d="M5.2 4.2L7 6.6" stroke="url(#pg)" stroke-width="1.7" stroke-linecap="round"/></svg>
<div class="a" style="left:651px;top:381px;width:1.6px;height:8.5px;background:#2a2a2a;border-radius:0 0 1px 1px"></div>
<!-- notes -->
<div class="t" style="left:140px;top:410px;font-size:5.6px;letter-spacing:-0.55px;color:#555">单击此处添加备注</div>
<div class="a" style="left:186px;top:407px;width:36px;height:13px;background:#f3f4f7;border-radius:2px;box-shadow:0 0 0 0.5px #dfe2e7"></div>
<svg class="a" style="left:188.5px;top:410px" width="7" height="7" viewBox="0 0 7 7"><rect x="0.5" y="0.5" width="5.5" height="5" fill="none" stroke="#555" stroke-width="0.6"/><path d="M2 2v2.5M2 2h1.5v1H2" fill="none" stroke="#555" stroke-width="0.5"/><circle cx="5.3" cy="5.5" r="1.2" fill="#8b4fe0"/></svg>
<div class="t" style="left:197px;top:410.5px;font-size:5.3px;color:#333">AI 演讲稿</div>
<!-- right scroll arrows -->
<svg class="a" style="left:770.5px;top:386px" width="4" height="3" viewBox="0 0 4 3"><path d="M0 0h4L2 2.5z" fill="#555"/></svg>
<svg class="a" style="left:770.5px;top:392px" width="4" height="4" viewBox="0 0 4 4"><path d="M0 2h4L2 0z M0 2.3h4L2 4.3z" fill="#666"/></svg>
<svg class="a" style="left:770.5px;top:398px" width="4" height="4" viewBox="0 0 4 4"><path d="M0 2h4L2 0z M0 2.3h4L2 4.3z" fill="#666"/></svg>

<!-- status bar -->
<div class="t" style="left:5px;top:422.5px;font-size:5.3px;color:#333">幻灯片 4 / 44</div>
<div class="a" style="left:41px;top:422px;width:0.5px;height:7px;background:#c8ccd3"></div>
<svg class="a" style="left:46px;top:421.5px" width="6" height="7" viewBox="0 0 6 7"><path d="M1 1.5h1.5l0.5-1 0.5 1H5v2L4 4.5v2H2v-2L1 3.5z" fill="none" stroke="#444" stroke-width="0.5"/></svg>
<div class="t" style="left:54px;top:422.5px;font-size:5.3px;color:#333">1_Office 主题</div>
<div class="a" style="left:92px;top:422px;width:0.5px;height:7px;background:#c8ccd3"></div>
<svg class="a" style="left:97px;top:421.5px" width="6" height="7" viewBox="0 0 6 7"><rect x="0.5" y="0.5" width="4.5" height="6" fill="none" stroke="#444" stroke-width="0.5"/><path d="M1.5 2.5h2.5M1.5 4h2.5" stroke="#444" stroke-width="0.4"/></svg>
<div class="t" style="left:105px;top:422.5px;font-size:5.3px;color:#333">校对</div>

<svg class="a" style="left:509px;top:421.5px" width="7" height="7" viewBox="0 0 7 7"><circle cx="3.5" cy="3.5" r="2.9" fill="none" stroke="#444" stroke-width="0.5"/><path d="M1.5 3.5h4" stroke="#444" stroke-width="0.5"/></svg>
<div class="t" style="left:517px;top:422.5px;font-size:5.3px;color:#333">智能美化</div>
<svg class="a" style="left:540px;top:424.5px" width="3" height="2" viewBox="0 0 3 2"><path d="M0 0h3L1.5 2z" fill="#333"/></svg>
<div class="a" style="left:548px;top:422px;width:0.5px;height:7px;background:#c8ccd3"></div>
<svg class="a" style="left:555px;top:422px" width="6" height="6" viewBox="0 0 6 6"><path d="M0 0.7h6M0 3h6M0 5.3h6" stroke="#444" stroke-width="0.5"/></svg>
<div class="t" style="left:563px;top:422.5px;font-size:5.3px;color:#333">备注</div>
<svg class="a" style="left:575.5px;top:424.5px" width="3" height="2" viewBox="0 0 3 2"><path d="M0 0h3L1.5 2z" fill="#333"/></svg>
<svg class="a" style="left:586px;top:421.5px" width="6" height="7" viewBox="0 0 6 7"><path d="M0.5 0.5h5v4.5H2.5L0.5 6.5z" fill="none" stroke="#444" stroke-width="0.5"/></svg>
<div class="t" style="left:593.5px;top:422.5px;font-size:5.3px;color:#333">批注</div>
<div class="a" style="left:611.5px;top:422px;width:0.5px;height:7px;background:#c8ccd3"></div>
<div class="a" style="left:613.5px;top:421px;width:9px;height:8.5px;background:#d7dbe1;border-radius:1.5px"></div>
<svg class="a" style="left:615px;top:422.5px" width="6" height="6" viewBox="0 0 6 6"><rect x="0.3" y="0.3" width="5.4" height="5.4" fill="none" stroke="#444" stroke-width="0.5"/><path d="M2 0.3v5.4" stroke="#444" stroke-width="0.5"/></svg>
<svg class="a" style="left:628.5px;top:422.5px" width="6" height="6" viewBox="0 0 6 6"><rect x="0.3" y="0.3" width="2.2" height="2.2" fill="none" stroke="#444" stroke-width="0.45"/><rect x="3.5" y="0.3" width="2.2" height="2.2" fill="none" stroke="#444" stroke-width="0.45"/><rect x="0.3" y="3.5" width="2.2" height="2.2" fill="none" stroke="#444" stroke-width="0.45"/><rect x="3.5" y="3.5" width="2.2" height="2.2" fill="none" stroke="#444" stroke-width="0.45"/></svg>
<svg class="a" style="left:641px;top:422.5px" width="6" height="6" viewBox="0 0 6 6"><path d="M0.3 0.8h2.2l0.5 0.6 0.5-0.6h2.2v4.4H3.5L3 5.7 2.5 5.2H0.3z M3 1.4v4" fill="none" stroke="#444" stroke-width="0.45"/></svg>
<div class="a" style="left:657.5px;top:421px;width:9px;height:8.5px;background:#ea6a24;border-radius:1.5px"></div>
<svg class="a" style="left:660.5px;top:423px" width="4" height="5" viewBox="0 0 4 5"><path d="M0 0v5l4-2.5z" fill="#fff"/></svg>
<svg class="a" style="left:670px;top:424.5px" width="3" height="2" viewBox="0 0 3 2"><path d="M0 0h3L1.5 2z" fill="#333"/></svg>
<div class="a" style="left:678.5px;top:422px;width:0.5px;height:7px;background:#c8ccd3"></div>
<svg class="a" style="left:683.5px;top:422px" width="6" height="6" viewBox="0 0 6 6"><path d="M0.3 2V0.3H2M4 0.3h1.7V2M5.7 4v1.7H4M2 5.7H0.3V4M1 1l1.3 1.3M5 1L3.7 2.3M5 5L3.7 3.7M1 5l1.3-1.3" fill="none" stroke="#444" stroke-width="0.45"/></svg>
<div class="t" style="left:698px;top:422.5px;font-size:5.3px;color:#333">104%</div>
<svg class="a" style="left:716px;top:424.5px" width="3" height="2" viewBox="0 0 3 2"><path d="M0 0h3L1.5 2z" fill="#333"/></svg>
<div class="a" style="left:727px;top:425px;width:5px;height:0.8px;background:#333"></div>
<div class="a" style="left:737px;top:424.8px;width:44px;height:0.9px;background:#c8ccd3"></div>
<div class="a" style="left:737px;top:424.6px;width:20px;height:1.2px;background:#3b78d8"></div>
<div class="a" style="left:757px;top:424px;width:1.5px;height:2.5px;background:#555"></div>
<svg class="a" style="left:787px;top:422.5px" width="5" height="5" viewBox="0 0 5 5"><path d="M2.5 0v5M0 2.5h5" stroke="#333" stroke-width="0.8"/></svg>

<!-- taskbar -->
<div class="a" style="left:9px;top:434px;width:8px;height:8px;border-radius:50%;background:radial-gradient(circle at 40% 40%,#ffb347,#f07d1a)"></div>
<div class="a" style="left:13px;top:432px;width:5px;height:5px;border-radius:50%;background:#d9262c;box-shadow:0 0 0 0.6px #fff"></div>
<div class="t" style="left:14.3px;top:432.6px;font-size:3.8px;color:#fff;font-weight:bold">1</div>
<div class="t" style="left:21px;top:434px;font-size:4.6px;color:#222">6°C</div>
<div class="t" style="left:21px;top:440.5px;font-size:4.6px;color:#333">晴朗</div>

<!-- windows logo -->
<svg class="a" style="left:257px;top:435.5px" width="10" height="10" viewBox="0 0 10 10"><rect x="0" y="0" width="4.7" height="4.7" fill="#1f8fe8"/><rect x="5.3" y="0" width="4.7" height="4.7" fill="#1f9af0"/><rect x="0" y="5.3" width="4.7" height="4.7" fill="#1a7fd8"/><rect x="5.3" y="5.3" width="4.7" height="4.7" fill="#1c8ae3"/></svg>
<div class="a" style="left:273px;top:433.5px;width:89px;height:13px;background:#f7f9fb;border-radius:7px;box-shadow:0 0 0 0.5px #d4dae2"></div>
<svg class="a" style="left:277px;top:437px" width="6" height="6" viewBox="0 0 6 6"><circle cx="2.5" cy="2.5" r="1.9" fill="none" stroke="#111" stroke-width="1"/><path d="M3.9 3.9L5.6 5.6" stroke="#111" stroke-width="1"/></svg>
<div class="t" style="left:287px;top:437px;font-size:5.8px;color:#333">搜索</div>
<svg class="a" style="left:342px;top:434px" width="20" height="12" viewBox="0 0 20 12"><path d="M1 11c2-4 6-6 10-5 3 1 5 2 8 5z" fill="#f3e7dc" stroke="#c9b9a8" stroke-width="0.4"/><circle cx="13" cy="3" r="1" fill="#d8643a"/><circle cx="9" cy="2" r="0.8" fill="#e88a3a"/><circle cx="16" cy="6" r="1.2" fill="#8a4a2a"/><path d="M6 4l2 1M15 1l2 2" stroke="#d8643a" stroke-width="0.6"/></svg>
<div class="a" style="left:369px;top:436px;width:8px;height:8px;background:#fff;box-shadow:0 0 0 0.5px #999"></div>
<div class="a" style="left:369px;top:438.5px;width:5.5px;height:5.5px;background:#111"></div>
<!-- explorer -->
<div class="a" style="left:387px;top:436px;width:10px;height:8px;background:#f5c12c;border-radius:1px"></div>
<div class="a" style="left:387px;top:435px;width:5px;height:2px;background:#e8a913;border-radius:1px 1px 0 0"></div>
<div class="a" style="left:387px;top:440px;width:10px;height:1.2px;background:#3b8ee8"></div>
<!-- edge -->
<div class="a" style="left:405px;top:435px;width:10px;height:10px;border-radius:50%;background:conic-gradient(from 200deg,#1e6fd0,#34b6f0,#59d47a,#2a9ee8,#1e6fd0)"></div>
<div class="a" style="left:408.5px;top:438.5px;width:4px;height:4px;border-radius:50%;background:#e7ebf2"></div>
<!-- store -->
<div class="a" style="left:424px;top:436.5px;width:10px;height:8.5px;background:#1a5fc0;border-radius:1px"></div>
<div class="a" style="left:426.5px;top:435px;width:5px;height:2px;border:0.6px solid #1a5fc0;border-bottom:none;border-radius:2px 2px 0 0"></div>
<svg class="a" style="left:426px;top:438.5px" width="6" height="5" viewBox="0 0 6 5"><rect x="0" y="0" width="2.8" height="2.3" fill="#f35325"/><rect x="3.2" y="0" width="2.8" height="2.3" fill="#81bc06"/><rect x="0" y="2.7" width="2.8" height="2.3" fill="#05a6f0"/><rect x="3.2" y="2.7" width="2.8" height="2.3" fill="#ffba08"/></svg>
<!-- edge beta -->
<div class="a" style="left:443px;top:435px;width:10px;height:10px;border-radius:50%;background:conic-gradient(from 200deg,#1e6fd0,#34b6f0,#5ad0b0,#2a9ee8,#1e6fd0)"></div>
<div class="a" style="left:446.5px;top:438.5px;width:4px;height:4px;border-radius:50%;background:#e7ebf2"></div>
<div class="a" style="left:449px;top:441px;width:5px;height:4px;border-radius:1px;background:#a05ae0"></div>
<!-- green app -->
<div class="a" style="left:461px;top:436px;width:9px;height:9px;background:#2fc46a;border-radius:1.5px"></div>
<svg class="a" style="left:462.5px;top:438.5px" width="6" height="4" viewBox="0 0 6 4"><path d="M0.5 0.5L3 3L5.5 0.5" fill="none" stroke="#fff" stroke-width="0.8"/></svg>
<!-- black app -->
<div class="a" style="left:479px;top:435.5px;width:9.5px;height:9.5px;background:#111;border-radius:2px"></div>
<svg class="a" style="left:480.5px;top:437px" width="6.5" height="6.5" viewBox="0 0 6.5 6.5"><path d="M0.8 1L3.2 3.3L5.7 1M3.2 3.3V5.8M0.8 1V4.5L3.2 5.8L5.7 4.5V1" fill="none" stroke="#ddd" stroke-width="0.5"/></svg>
<!-- wechat highlighted -->
<div class="a" style="left:494px;top:432px;width:16px;height:16px;background:#f0c7c7;border-radius:2px"></div>
<div class="a" style="left:497px;top:435px;width:10px;height:10px;background:#2dc25a;border-radius:2px"></div>
<div class="a" style="left:498.3px;top:436.8px;width:5px;height:4px;background:#fff;border-radius:50%"></div>
<div class="a" style="left:501px;top:438.8px;width:4.5px;height:3.5px;background:#fff;border-radius:50%;box-shadow:0 0 0 0.4px #2dc25a"></div>
<div class="a" style="left:497px;top:447.5px;width:10px;height:1.3px;background:#d03a3a;border-radius:1px"></div>
<!-- blue app -->
<div class="a" style="left:516px;top:435.5px;width:9.5px;height:9.5px;background:#1f7ae8;border-radius:2px"></div>
<svg class="a" style="left:517px;top:437.5px" width="7.5" height="5" viewBox="0 0 7.5 5"><path d="M0.3 4.5L2 1l1.7 3.5L5.4 1l1.8 3.5" fill="none" stroke="#fff" stroke-width="0.8"/></svg>
<div class="a" style="left:520px;top:447.5px;width:2px;height:1px;background:#666;border-radius:1px"></div>
<!-- wps -->
<div class="a" style="left:532px;top:432px;width:15px;height:16px;background:#eef1f5;border-radius:2px"></div>
<svg class="a" style="left:534.5px;top:436px" width="10" height="7" viewBox="0 0 10 7"><path d="M0.6 0.6L2.8 6.2L5 2.6L7.2 6.2L9.4 0.6" fill="none" stroke="#e8252a" stroke-width="1.6" stroke-linejoin="round"/></svg>
<div class="a" style="left:536.5px;top:447.5px;width:7px;height:1.3px;background:#3b78d8;border-radius:1px"></div>

<!-- tray -->
<svg class="a" style="left:671px;top:438px" width="5" height="3" viewBox="0 0 5 3"><path d="M0.4 2.6L2.5 0.5L4.6 2.6" fill="none" stroke="#222" stroke-width="0.7"/></svg>
<svg class="a" style="left:685px;top:435.5px" width="5" height="8" viewBox="0 0 5 8"><rect x="1.2" y="0.4" width="2.6" height="4.6" rx="1.3" fill="#4a80d8"/><path d="M0.4 3.6a2.1 2.1 0 0 0 4.2 0M2.5 5.8v1.8" fill="none" stroke="#4a80d8" stroke-width="0.6"/></svg>
<div class="t" style="left:697px;top:436.5px;font-size:6px;color:#222">中</div>
<svg class="a" style="left:710px;top:436px" width="7" height="6" viewBox="0 0 7 6"><path d="M0.3 2a4.5 4.5 0 0 1 6.4 0M1.3 3.2a3 3 0 0 1 4.4 0M2.4 4.4a1.5 1.5 0 0 1 2.2 0" fill="none" stroke="#333" stroke-width="0.6"/><circle cx="3.5" cy="5.4" r="0.5" fill="#333"/></svg>
<svg class="a" style="left:720px;top:436px" width="7" height="6" viewBox="0 0 7 6"><path d="M0.3 2h1.5L3.5 0.4v5.2L1.8 4H0.3z" fill="none" stroke="#333" stroke-width="0.5"/><path d="M4.6 1.8a1.6 1.6 0 0 1 0 2.4M5.8 1a2.8 2.8 0 0 1 0 4" fill="none" stroke="#333" stroke-width="0.5"/></svg>
<div class="a" style="left:731px;top:437px;width:8px;height:4.5px;background:#2a8c3a;border-radius:0.6px"></div>
<div class="a" style="left:732.5px;top:435.5px;width:2px;height:2px;background:#2a8c3a"></div>
<div class="t" style="left:740.5px;top:436.5px;font-size:5.2px;color:#222">100%</div>
<div class="t" style="left:770px;top:432.5px;font-size:5.5px;color:#222;-webkit-text-stroke-width:0">15:13</div>
<div class="t" style="left:759px;top:440.5px;font-size:5.5px;color:#222;-webkit-text-stroke-width:0;letter-spacing:-0.15px">2026/1/17</div>
<svg class="a" style="left:786px;top:436px" width="6" height="7" viewBox="0 0 6 7"><path d="M0.5 0.5h5v5H3.5L2.5 6.5 1.5 5.5h-1z" fill="none" stroke="#333" stroke-width="0.5"/><path d="M3 2v2" stroke="#333" stroke-width="0.5"/></svg>

<!-- sidebar icons -->
<div class="a" style="left:785px;top:72px;width:6px;height:0.6px;background:#555"></div>
<svg class="a" style="left:784.5px;top:82.5px" width="7" height="7" viewBox="0 0 6 6"><path d="M0 1.5h6M0 4.5h6" stroke="#444" stroke-width="0.55"/><circle cx="2" cy="1.5" r="0.9" fill="#e9ecf1" stroke="#444" stroke-width="0.55"/><circle cx="4" cy="4.5" r="0.9" fill="#e9ecf1" stroke="#444" stroke-width="0.55"/></svg>
<svg class="a" style="left:784.5px;top:99.0px" width="7" height="7" viewBox="0 0 6 6"><path d="M3 0.3L3.8 2.2L5.7 2.3L4.2 3.6L4.7 5.6L3 4.5L1.3 5.6L1.8 3.6L0.3 2.3L2.2 2.2z" fill="none" stroke="#444" stroke-width="0.55"/></svg>
<svg class="a" style="left:784.5px;top:115.5px" width="7" height="7" viewBox="0 0 6 6"><rect x="0.3" y="0.3" width="3.5" height="3.5" fill="none" stroke="#444" stroke-width="0.55"/><rect x="2.2" y="2.2" width="3.5" height="3.5" fill="#e9ecf1" stroke="#444" stroke-width="0.55"/></svg>
<svg class="a" style="left:784.5px;top:132.0px" width="7" height="7" viewBox="0 0 6 6"><path d="M0.3 1h1.5l2.4 4h1.5M0.3 5h1.5l2.4-4h1.5M5 0.3l0.7 0.7L5 1.7M5 4.3l0.7 0.7L5 5.7" fill="none" stroke="#444" stroke-width="0.55"/></svg>
<svg class="a" style="left:784.5px;top:148.5px" width="7" height="7" viewBox="0 0 6 6"><path d="M2 0.5L0.3 1.8 1 3.2 1.5 3V5.7h3V3l0.5 0.2 0.7-1.4L4 0.5C3.6 1.3 2.4 1.3 2 0.5z" fill="none" stroke="#444" stroke-width="0.55"/></svg>
<svg class="a" style="left:784.5px;top:165.5px" width="7" height="7" viewBox="0 0 6 6"><rect x="0.3" y="0.3" width="5.4" height="5.4" fill="none" stroke="#444" stroke-width="0.55"/><path d="M0.3 4L2 2.5 3.5 4 5.7 2" fill="none" stroke="#444" stroke-width="0.55"/></svg>
<svg class="a" style="left:784.5px;top:182.0px" width="7" height="7" viewBox="0 0 6 6"><path d="M0.3 0.5h2.5v5.2H0.3zM2.8 0.5h2.9v5.2H2.8M4 2v2" fill="none" stroke="#444" stroke-width="0.55"/></svg>
<svg class="a" style="left:784.5px;top:199.0px" width="7" height="7" viewBox="0 0 6 6"><circle cx="3" cy="3" r="2.7" fill="none" stroke="#444" stroke-width="0.55"/><path d="M2.1 2.2a0.9 0.9 0 1 1 1.2 0.9V3.8" fill="none" stroke="#444" stroke-width="0.55"/><circle cx="3" cy="4.6" r="0.3" fill="#444"/></svg>
<svg class="a" style="left:784.5px;top:215.5px" width="7" height="7" viewBox="0 0 6 6"><path d="M0.3 0.5h5.4v4H2L0.3 5.7z" fill="none" stroke="#444" stroke-width="0.55"/></svg>
<div class="t" style="left:784px;top:231.5px;font-size:6px;color:#444;letter-spacing:-0.8px">•••</div>
<!-- white panel at right of ribbon -->
<div class="a" style="left:775px;top:31px;width:20px;height:31px;background:#fff;border-radius:0 4px 4px 0"></div>

<!-- toast -->
<div class="a" style="left:5px;top:383.5px;width:48px;height:14px;background:rgba(70,70,72,0.78);border-radius:3px"></div>
<svg class="a" style="left:8.5px;top:386.5px" width="8" height="8" viewBox="0 0 8 8"><circle cx="4" cy="4" r="3.5" fill="none" stroke="#aaa" stroke-width="0.5"/><path d="M2.8 2.5v2a1.2 1.2 0 0 0 2.4 0v-2" fill="none" stroke="#aaa" stroke-width="0.5"/></svg>
<div class="t" style="left:19px;top:388px;font-size:5.3px;color:#a8a8a8">识别中...</div>
<!-- meeting window -->
<div class="a" style="left:466px;top:10.2px;width:308px;height:1px;background:#fbfcfd"></div>
<div class="a" style="left:324px;top:12px;width:449.5px;height:369px;background:#1e1e1e;overflow:hidden;box-shadow:0 -0.8px 0 0 #0a0a0a,0 0.8px 0 0 #0a0a0a">
<div class="a" style="left:0;top:0;width:450px;height:14px;background:#2c2f32"></div>
<div class="a" style="left:0;top:14px;width:450px;height:0.8px;background:#232427"></div>
<div class="a" style="left:0;top:14.8px;width:450px;height:14.2px;background:#2c2f32"></div>
<div class="a" style="left:0;top:29px;width:450px;height:0.6px;background:#232427"></div>
<div class="a" style="left:0;top:73px;width:450px;height:253px;background:#1d1e20"></div>
</div>
<div class="a" style="left:328px;top:18px;width:6px;height:2.2px;background:#fff;border-radius:1px"></div>
<div class="a" style="left:338.5px;top:16px;width:6px;height:6px;border:0.9px solid #fff;border-top-width:1.8px;border-radius:1px"></div>
<svg class="a" style="left:347.5px;top:15.5px" width="6" height="7" viewBox="0 0 6 7"><path d="M0 1h6M0 3.5h6M0 6h6" stroke="#2d8cf0" stroke-width="1.1"/></svg>
<svg class="a" style="left:763px;top:16px" width="7" height="7" viewBox="0 0 7 7"><path d="M0.5 1h6M0.5 3.5h4M0.5 6h6" fill="none" stroke="#fff" stroke-width="1" stroke-linecap="round"/><path d="M5 2.3L6.8 3.5 5 4.7z" fill="#fff"/></svg>
<svg class="a" style="left:329px;top:30.5px" width="5" height="8" viewBox="0 0 5 8"><rect x="1.2" y="0.5" width="2.6" height="4.5" rx="1.3" fill="#ddd"/><path d="M0.5 4a2 2 0 0 0 4 0M2.5 6v1.5M1.2 7.5h2.6" fill="none" stroke="#ddd" stroke-width="0.6"/></svg>
<div class="a" style="left:338.5px;top:30px;width:0.5px;height:8px;background:#555"></div>
<div class="t" style="left:342px;top:31.8px;font-size:5.3px;color:#e6e6e6">正在讲话：刘泽;</div>
<svg class="a" style="left:757px;top:30px" width="17" height="10" viewBox="0 0 17 10"><path d="M0 6l4-5 4 5-4 4z M6 6l4-5 4 5-4 4z M11 5l3-4 3 4-3 4z" fill="#4a4c50"/></svg>
<div class="a" style="left:324px;top:85px;width:112px;height:63px;background:#2d3033;box-shadow:inset 0 0 0 1px #2dc98b;"><div class="a" style="left:38px;top:13.5px;width:35px;height:35px;border-radius:50%;overflow:hidden;background:#a9d3f5;box-shadow:0 0 0 0.8px #1c1d1f"><div class="a" style="left:0;top:0;width:35px;height:35px;background:linear-gradient(170deg,#b5d8f5 0,#9ccaf0 50%,#b9dcf6 100%)"></div><div class="a" style="left:12px;top:-1px;width:21px;height:12px;border-radius:50% 50% 30% 40%;background:#3b3130"></div><div class="a" style="left:11px;top:5px;width:6px;height:12px;border-radius:40%;background:#3b3130;transform:rotate(-15deg)"></div><div class="a" style="left:16px;top:8px;width:14px;height:8px;border-radius:30%;background:#d9c3b5"></div><div class="a" style="left:16px;top:12px;width:15px;height:12px;border-radius:30% 30% 45% 45%;background:#c9c5c2"></div><div class="a" style="left:0;top:0;width:35px;height:35px;background:#2a2a30;clip-path:polygon(6px 35px,9px 29px,17px 24px,31px 21px,35px 19px,35px 35px)"></div><div class="a" style="left:19px;top:28px;width:11px;height:5px;background:#dfe3e6;transform:skewX(-15deg)"></div><div class="a" style="left:20.5px;top:30px;width:2.5px;height:2.5px;border-radius:50%;background:#d8202e"></div></div><div class="a" style="left:1.5px;top:53.5px;width:8px;height:8px;background:#f0a020;border-radius:1px"><div class="a" style="left:2.8px;top:1.5px;width:2.4px;height:2.4px;border-radius:50%;background:#fff"></div><div class="a" style="left:1.8px;top:4.3px;width:4.4px;height:2.2px;border-radius:2px 2px 0 0;background:#fff"></div></div><div class="a" style="left:11px;top:54px;width:19px;height:7px;background:rgba(22,23,25,0.75);border-radius:1px"><svg class="a" style="left:1.2px;top:0.8px" width="6" height="6" viewBox="0 0 6 6"><rect x="2" y="0.4" width="2.2" height="3.6" rx="1.1" fill="#fff"/><path d="M1.2 3a1.9 1.9 0 0 0 3.8 0M3.1 4.9v1" fill="none" stroke="#fff" stroke-width="0.6"/></svg><div class="t" style="left:7.5px;top:0.9px;font-size:5.3px;color:#f2f2f2">刘泽</div></div></div>
<div class="a" style="left:437px;top:85px;width:111px;height:63px;background:#2d3033;"><div class="a" style="left:38px;top:13.5px;width:35px;height:35px;border-radius:50%;overflow:hidden;background:#3074c8;box-shadow:0 0 0 0.8px #1c1d1f"><div class="t" style="left:0;width:35px;top:10.075px;text-align:center;font-size:13.5px;color:#fff;">子辰</div></div><div class="a" style="left:1.5px;top:54px;width:26px;height:7.5px;background:rgba(22,23,25,0.7);border-radius:1px"><svg class="a" style="left:1px;top:0.5px" width="6.5" height="6.5" viewBox="0 0 6.5 6.5"><rect x="2.1" y="0.5" width="2.6" height="3.8" rx="1.3" fill="#fff"/><path d="M1.2 3.2a2.1 2.1 0 0 0 4.2 0M3.3 5.3v1" fill="none" stroke="#fff" stroke-width="0.7"/><path d="M0.6 6L5.9 0.7" stroke="#d9402f" stroke-width="1.0"/></svg><div class="t" style="left:8.5px;top:0.9px;font-size:5.3px;color:#f4f4f4;-webkit-text-stroke-width:0.1px">米子辰</div></div></div>
<div class="a" style="left:549px;top:85px;width:112px;height:63px;background:#2d3033;"><div class="a" style="left:38px;top:13.5px;width:35px;height:35px;border-radius:50%;overflow:hidden;background:#3074c8;box-shadow:0 0 0 0.8px #1c1d1f"><div class="t" style="left:0;width:35px;top:9.799999999999999px;text-align:center;font-size:14px;color:#fff;font-family:"Liberation Sans",sans-serif">E</div></div><div class="a" style="left:1.5px;top:54px;width:28px;height:7.5px;background:rgba(22,23,25,0.7);border-radius:1px"><svg class="a" style="left:1px;top:0.5px" width="6.5" height="6.5" viewBox="0 0 6.5 6.5"><rect x="2.1" y="0.5" width="2.6" height="3.8" rx="1.3" fill="#fff"/><path d="M1.2 3.2a2.1 2.1 0 0 0 4.2 0M3.3 5.3v1" fill="none" stroke="#fff" stroke-width="0.7"/><path d="M0.6 6L5.9 0.7" stroke="#d9402f" stroke-width="1.0"/></svg><div class="t" style="left:8.5px;top:0.9px;font-size:5.3px;color:#f4f4f4;-webkit-text-stroke-width:0.1px">eternity</div></div></div>
<div class="a" style="left:662px;top:85px;width:111.5px;height:63px;background:#2d3033;"><div class="a" style="left:38px;top:13.5px;width:35px;height:35px;border-radius:50%;overflow:hidden;background:#0a0f1c;box-shadow:0 0 0 0.8px #1c1d1f"><div class="a" style="left:0;top:0;width:35px;height:35px;background:radial-gradient(circle 30px at 22% 35%,#dfe8f2 0,#9fb8d8 18%,#3f6aa5 38%,#183a70 52%,#08142a 66%,#030508 80%,#020305 100%)"></div><div class="a" style="left:3px;top:3px;width:15px;height:10px;border-radius:50%;background:radial-gradient(#ffffff 0,#f2f5f9 40%,rgba(230,236,244,0) 72%)"></div><div class="a" style="left:1px;top:10px;width:8px;height:16px;border-radius:50%;background:radial-gradient(#f4f7fb 0,#dfe8f2 35%,rgba(230,236,244,0) 70%)"></div><div class="a" style="left:8px;top:12px;width:10px;height:8px;border-radius:50%;background:radial-gradient(#e9eef5 0,rgba(230,236,244,0) 70%)"></div><div class="a" style="left:14px;top:6px;width:8px;height:12px;border-radius:40%;background:radial-gradient(#b08a50 0,rgba(140,100,50,0) 70%)"></div></div><div class="a" style="left:1.5px;top:54px;width:20.5px;height:7.5px;background:rgba(22,23,25,0.7);border-radius:1px"><svg class="a" style="left:1px;top:0.5px" width="6.5" height="6.5" viewBox="0 0 6.5 6.5"><rect x="2.1" y="0.5" width="2.6" height="3.8" rx="1.3" fill="#fff"/><path d="M1.2 3.2a2.1 2.1 0 0 0 4.2 0M3.3 5.3v1" fill="none" stroke="#fff" stroke-width="0.7"/><path d="M0.6 6L5.9 0.7" stroke="#d9402f" stroke-width="1.0"/></svg><div class="t" style="left:8.5px;top:0.9px;font-size:5.3px;color:#f4f4f4;-webkit-text-stroke-width:0.1px">未来</div></div></div>
<div class="a" style="left:324px;top:148.5px;width:112px;height:62.5px;background:#2d3033;"><div class="a" style="left:38px;top:13.5px;width:35px;height:35px;border-radius:50%;overflow:hidden;background:#dfe6ef;box-shadow:0 0 0 0.8px #1c1d1f"><div class="a" style="left:0;top:0;width:35px;height:35px;background:repeating-linear-gradient(180deg,#eef2f8 0 3px,#3d5c8c 3px 4.2px,#dfe6f0 4.2px 6px)"></div><div class="a" style="left:0;top:0;width:6px;height:35px;background:#4a6a98;opacity:0.5"></div><div class="a" style="left:24px;top:12px;width:9px;height:12px;background:#6a8ab8;opacity:0.6"></div><div class="a" style="left:13px;top:2px;width:9px;height:9px;border-radius:50% 50% 40% 40%;background:#1b1716"></div><div class="a" style="left:5px;top:10px;width:17px;height:19px;border-radius:45% 35% 25% 25%;background:#d9ddee"></div><div class="a" style="left:11px;top:13px;width:7px;height:16px;border-radius:40%;background:#1c2030;transform:rotate(-40deg)"></div><div class="a" style="left:24px;top:23px;width:11px;height:7px;background:#1c2030;border-radius:30%"></div><div class="a" style="left:17px;top:26px;width:13px;height:7px;border-radius:40%;background:#e2e6f0"></div><div class="a" style="left:2px;top:25px;width:11px;height:10px;background:#c9a250;border-radius:20%;transform:rotate(10deg)"></div></div><div class="a" style="left:1.5px;top:54px;width:60px;height:7.5px;background:rgba(22,23,25,0.7);border-radius:1px"><svg class="a" style="left:1px;top:0.5px" width="6.5" height="6.5" viewBox="0 0 6.5 6.5"><rect x="2.1" y="0.5" width="2.6" height="3.8" rx="1.3" fill="#fff"/><path d="M1.2 3.2a2.1 2.1 0 0 0 4.2 0M3.3 5.3v1" fill="none" stroke="#fff" stroke-width="0.7"/><path d="M0.6 6L5.9 0.7" stroke="#d9402f" stroke-width="1.0"/></svg><div class="t" style="left:8.5px;top:0.9px;font-size:5.3px;color:#f4f4f4;-webkit-text-stroke-width:0.1px">哩咖、脖子伶の冒懂 <span style="font-size:5px">&#x270E;</span></div></div></div>
<div class="a" style="left:437px;top:148.5px;width:111px;height:62.5px;background:#2d3033;"><div class="a" style="left:38px;top:13.5px;width:35px;height:35px;border-radius:50%;overflow:hidden;background:#ffffff;box-shadow:0 0 0 0.8px #1c1d1f"><div class="a" style="left:5px;top:3px;width:25px;height:14px;background:radial-gradient(ellipse at 50% 80%,#e6e2f2 0,#cfc8e6 55%,#b9b0d8 100%);clip-path:polygon(0 90%,5% 40%,15% 55%,22% 15%,35% 35%,45% 0,58% 30%,70% 8%,78% 40%,90% 25%,95% 60%,100% 90%)"></div><div class="a" style="left:8px;top:14px;width:19px;height:4.5px;border-radius:2px;background:#24252c"></div><div class="a" style="left:9px;top:18px;width:17px;height:8px;border-radius:0 0 45% 45%;background:#f8ebe4"></div><div class="a" style="left:11px;top:21px;width:3px;height:1.5px;border-radius:50%;background:#f2c0c0"></div><div class="a" style="left:21px;top:21px;width:3px;height:1.5px;border-radius:50%;background:#f2c0c0"></div><div class="a" style="left:0;top:0;width:35px;height:35px;background:#2a2d45;clip-path:polygon(10px 25px,25px 25px,30px 35px,5px 35px)"></div></div><div class="a" style="left:1.5px;top:54px;width:15.5px;height:7.5px;background:rgba(22,23,25,0.7);border-radius:1px"><svg class="a" style="left:1px;top:0.5px" width="6.5" height="6.5" viewBox="0 0 6.5 6.5"><rect x="2.1" y="0.5" width="2.6" height="3.8" rx="1.3" fill="#fff"/><path d="M1.2 3.2a2.1 2.1 0 0 0 4.2 0M3.3 5.3v1" fill="none" stroke="#fff" stroke-width="0.7"/><path d="M0.6 6L5.9 0.7" stroke="#d9402f" stroke-width="1.0"/></svg><div class="t" style="left:8.5px;top:0.9px;font-size:5.3px;color:#f4f4f4;-webkit-text-stroke-width:0.1px">铮</div></div></div>
<div class="a" style="left:549px;top:148.5px;width:112px;height:62.5px;background:#2d3033;"><div class="a" style="left:38px;top:13.5px;width:35px;height:35px;border-radius:50%;overflow:hidden;background:#6f9dcf;box-shadow:0 0 0 0.8px #1c1d1f"><div class="a" style="left:0;top:0;width:35px;height:35px;background:linear-gradient(180deg,#a8cdef 0,#8fbde6 30%,#5e88b8 45%,#4d78a8 70%,#3d5f85 82%,#1f2d40 90%,#151d2a 100%)"></div><div class="a" style="left:0;top:24.5px;width:35px;height:0.8px;background:#34455c"></div><div class="a" style="left:5px;top:24.5px;width:0.8px;height:5px;background:#34455c"></div><div class="a" style="left:22px;top:24.5px;width:0.8px;height:5px;background:#34455c"></div></div><div class="a" style="left:99px;top:4px;width:9.5px;height:9px;background:#18191b;border-radius:2px"><div class="a" style="left:2px;top:4px;width:1.2px;height:1.2px;border-radius:50%;background:#ddd"></div><div class="a" style="left:4.2px;top:4px;width:1.2px;height:1.2px;border-radius:50%;background:#ddd"></div><div class="a" style="left:6.4px;top:4px;width:1.2px;height:1.2px;border-radius:50%;background:#ddd"></div></div><div class="a" style="left:1.5px;top:54px;width:31px;height:7.5px;background:rgba(22,23,25,0.7);border-radius:1px"><svg class="a" style="left:1px;top:0.5px" width="6.5" height="6.5" viewBox="0 0 6.5 6.5"><rect x="2.1" y="0.5" width="2.6" height="3.8" rx="1.3" fill="#fff"/><path d="M1.2 3.2a2.1 2.1 0 0 0 4.2 0M3.3 5.3v1" fill="none" stroke="#fff" stroke-width="0.7"/><path d="M0.6 6L5.9 0.7" stroke="#d9402f" stroke-width="1.0"/></svg><div class="t" style="left:8.5px;top:0.9px;font-size:5.3px;color:#f4f4f4;-webkit-text-stroke-width:0.1px">筱 <span style="font-size:5px">&#x270E;</span> &#x9F8D;</div></div></div>
<div class="a" style="left:662px;top:148.5px;width:111.5px;height:62.5px;background:#2d3033;"><div class="a" style="left:38px;top:13.5px;width:35px;height:35px;border-radius:50%;overflow:hidden;background:#9db4cc;box-shadow:0 0 0 0.8px #1c1d1f"><div class="a" style="left:0;top:0;width:35px;height:35px;background:linear-gradient(180deg,#8fb0d2 0,#a9bfd6 25%,#b7c0c8 50%,#6f7a82 72%,#3a4048 100%)"></div><div class="a" style="left:5px;top:6px;width:24px;height:11px;background:linear-gradient(180deg,#f3c98a,#e3a765 60%,#c8b9a8);clip-path:polygon(0 100%,25% 30%,45% 0,65% 25%,85% 10%,100% 100%)"></div><div class="a" style="left:0;top:16px;width:35px;height:8px;background:#dfe3e8;opacity:0.6;clip-path:polygon(0 40%,30% 0,60% 30%,100% 10%,100% 100%,0 100%)"></div><div class="a" style="left:15px;top:13px;width:6px;height:22px;border-radius:45% 45% 10% 10%;background:#1f2124"></div><div class="a" style="left:11px;top:19px;width:14px;height:3px;background:#1f2124;transform:rotate(-20deg)"></div><div class="a" style="left:0;top:28px;width:35px;height:7px;background:#2f3236"></div></div><div class="a" style="left:1.5px;top:54px;width:53px;height:7.5px;background:rgba(22,23,25,0.7);border-radius:1px"><svg class="a" style="left:1px;top:0.5px" width="6.5" height="6.5" viewBox="0 0 6.5 6.5"><rect x="2.1" y="0.5" width="2.6" height="3.8" rx="1.3" fill="#fff"/><path d="M1.2 3.2a2.1 2.1 0 0 0 4.2 0M3.3 5.3v1" fill="none" stroke="#fff" stroke-width="0.7"/><path d="M0.6 6L5.9 0.7" stroke="#d9402f" stroke-width="1.0"/></svg><div class="t" style="left:8.5px;top:0.9px;font-size:5.3px;color:#f4f4f4;-webkit-text-stroke-width:0.1px">22053040202魏韶</div></div></div>
<div class="a" style="left:324px;top:211.5px;width:112px;height:63px;background:#2d3033;"><div class="a" style="left:38px;top:13.5px;width:35px;height:35px;border-radius:50%;overflow:hidden;background:#ffffff;box-shadow:0 0 0 0.8px #1c1d1f"><div class="a" style="left:4px;top:4px;width:28px;height:30px;border-radius:40% 40% 45% 45%;background:#fbe3d4"></div><div class="a" style="left:0;top:-2px;width:35px;height:11px;border-radius:50% 50% 20% 20%;background:#cf78c9"></div><div class="a" style="left:27px;top:4px;width:8px;height:22px;border-radius:40%;background:#c86ec4"></div><div class="a" style="left:8px;top:13px;width:6px;height:2px;border-top:1px solid #6a3a30;border-radius:50% 50% 0 0"></div><div class="a" style="left:18px;top:13px;width:6px;height:2px;border-top:1px solid #6a3a30;border-radius:50% 50% 0 0"></div><div class="a" style="left:6px;top:19px;width:21px;height:12px;border-radius:15% 15% 50% 50%;background:#ef6b6e"></div><div class="a" style="left:7px;top:19px;width:19px;height:2.5px;background:#fff;border-radius:1px"></div><div class="a" style="left:11px;top:26px;width:10px;height:4px;border-radius:50%;background:#f7a0a0"></div><div class="a" style="left:0;top:8px;width:4px;height:22px;background:#fff"></div></div><div class="a" style="left:1.5px;top:54px;width:20.5px;height:7.5px;background:rgba(22,23,25,0.7);border-radius:1px"><svg class="a" style="left:1px;top:0.5px" width="6.5" height="6.5" viewBox="0 0 6.5 6.5"><rect x="2.1" y="0.5" width="2.6" height="3.8" rx="1.3" fill="#fff"/><path d="M1.2 3.2a2.1 2.1 0 0 0 4.2 0M3.3 5.3v1" fill="none" stroke="#fff" stroke-width="0.7"/><path d="M0.6 6L5.9 0.7" stroke="#d9402f" stroke-width="1.0"/></svg><div class="t" style="left:8.5px;top:0.9px;font-size:5.3px;color:#f4f4f4;-webkit-text-stroke-width:0.1px">赵佳</div></div></div>
<div class="a" style="left:437px;top:211.5px;width:111px;height:63px;background:#2d3033;"><div class="a" style="left:38px;top:13.5px;width:35px;height:35px;border-radius:50%;overflow:hidden;background:#3074c8;box-shadow:0 0 0 0.8px #1c1d1f"><div class="t" style="left:0;width:35px;top:10.075px;text-align:center;font-size:13.5px;color:#fff;">月亮</div></div><div class="a" style="left:1.5px;top:54px;width:37px;height:7.5px;background:rgba(22,23,25,0.7);border-radius:1px"><svg class="a" style="left:1px;top:0.5px" width="6.5" height="6.5" viewBox="0 0 6.5 6.5"><rect x="2.1" y="0.5" width="2.6" height="3.8" rx="1.3" fill="#fff"/><path d="M1.2 3.2a2.1 2.1 0 0 0 4.2 0M3.3 5.3v1" fill="none" stroke="#fff" stroke-width="0.7"/><path d="M0.6 6L5.9 0.7" stroke="#d9402f" stroke-width="1.0"/></svg><div class="t" style="left:8.5px;top:0.9px;font-size:5.3px;color:#f4f4f4;-webkit-text-stroke-width:0.1px">我不看月亮.</div></div></div>
<div class="a" style="left:549px;top:211.5px;width:112px;height:63px;background:#2d3033;"><div class="a" style="left:38px;top:13.5px;width:35px;height:35px;border-radius:50%;overflow:hidden;background:#c9d2da;box-shadow:0 0 0 0.8px #1c1d1f"><div class="a" style="left:0;top:0;width:35px;height:35px;background:linear-gradient(180deg,#8fb2d8 0,#c9d8e8 25%,#e6e9ec 40%,#9aa4a0 52%,#3c4a3c 60%,#4a524e 68%,#7d8388 76%,#a7abaf 100%)"></div><div class="a" style="left:12px;top:3px;width:1px;height:22px;background:#505458"></div><div class="a" style="left:10px;top:3px;width:5px;height:1px;background:#505458"></div><div class="a" style="left:22px;top:10px;width:10px;height:12px;background:#5d6a60;clip-path:polygon(0 100%,20% 30%,50% 50%,70% 0,100% 40%,100% 100%)"></div><div class="a" style="left:2px;top:17px;width:10px;height:6px;background:#344034;border-radius:40% 40% 0 0"></div><div class="a" style="left:14px;top:21px;width:11px;height:4px;background:#1e2226;border-radius:1px"></div><div class="a" style="left:6px;top:28px;width:8px;height:2px;background:#e8eaec;transform:rotate(30deg)"></div></div><div class="a" style="left:1.5px;top:54px;width:15.5px;height:7.5px;background:rgba(22,23,25,0.7);border-radius:1px"><svg class="a" style="left:1px;top:0.5px" width="6.5" height="6.5" viewBox="0 0 6.5 6.5"><rect x="2.1" y="0.5" width="2.6" height="3.8" rx="1.3" fill="#fff"/><path d="M1.2 3.2a2.1 2.1 0 0 0 4.2 0M3.3 5.3v1" fill="none" stroke="#fff" stroke-width="0.7"/><path d="M0.6 6L5.9 0.7" stroke="#d9402f" stroke-width="1.0"/></svg><div class="t" style="left:8.5px;top:0.9px;font-size:5.3px;color:#f4f4f4;-webkit-text-stroke-width:0.1px">华</div></div></div>
<div class="a" style="left:662px;top:211.5px;width:111.5px;height:63px;background:#2d3033;"><div class="a" style="left:38px;top:13.5px;width:35px;height:35px;border-radius:50%;overflow:hidden;background:#5f9a45;box-shadow:0 0 0 0.8px #1c1d1f"><div class="a" style="left:0;top:0;width:35px;height:35px;background:radial-gradient(circle at 30% 30%,#a8d080 0,#78b455 25%,#5a9a3e 50%,#3f7f2c 80%,#356e25 100%)"></div><div class="a" style="left:4px;top:6px;width:10px;height:8px;border-radius:50%;background:#9ccc78;opacity:0.8"></div><div class="a" style="left:20px;top:8px;width:12px;height:9px;border-radius:50%;background:#8cc068;opacity:0.8"></div><div class="a" style="left:4px;top:24px;width:10px;height:9px;border-radius:50%;background:#88bf62;opacity:0.7"></div><div class="a" style="left:8px;top:0;width:20px;height:3px;background:#b9a890"></div><div class="a" style="left:18px;top:16px;width:1px;height:19px;background:#4a8a38"></div><div class="a" style="left:10px;top:18px;width:9px;height:4px;border-radius:50%;background:#ea98b0;transform:rotate(-25deg)"></div><div class="a" style="left:17px;top:17px;width:9px;height:4.5px;border-radius:50%;background:#f0a2b8;transform:rotate(15deg)"></div><div class="a" style="left:7px;top:23px;width:9px;height:3.5px;border-radius:50%;background:#e88aa6;transform:rotate(-30deg)"></div><div class="a" style="left:20px;top:13px;width:7px;height:3px;border-radius:50%;background:#eb96ae;transform:rotate(-10deg)"></div></div><div class="a" style="left:1.5px;top:54px;width:58px;height:7.5px;background:rgba(22,23,25,0.7);border-radius:1px"><svg class="a" style="left:1px;top:0.5px" width="6.5" height="6.5" viewBox="0 0 6.5 6.5"><rect x="2.1" y="0.5" width="2.6" height="3.8" rx="1.3" fill="#fff"/><path d="M1.2 3.2a2.1 2.1 0 0 0 4.2 0M3.3 5.3v1" fill="none" stroke="#fff" stroke-width="0.7"/><path d="M0.6 6L5.9 0.7" stroke="#d9402f" stroke-width="1.0"/></svg><div class="t" style="left:8.5px;top:0.9px;font-size:5.3px;color:#f4f4f4;-webkit-text-stroke-width:0.1px">交通2202班16田雨蒙</div></div></div>
<div class="a" style="left:324px;top:275px;width:112px;height:63px;background:#2d3033;"><div class="a" style="left:38px;top:13.5px;width:35px;height:35px;border-radius:50%;overflow:hidden;background:#6a6f78;box-shadow:0 0 0 0.8px #1c1d1f"><div class="a" style="left:0;top:0;width:35px;height:35px;background:linear-gradient(180deg,#4e5560 0,#6a6f78 30%,#8a8680 45%,#f0a544 55%,#e08838 62%,#2a2420 72%,#15120f 100%)"></div><div class="a" style="left:15px;top:14px;width:5px;height:5px;border-radius:50%;background:#111"></div><div class="a" style="left:12px;top:18px;width:12px;height:17px;border-radius:40% 40% 0 0;background:#15120f"></div><div class="a" style="left:24px;top:19px;width:3px;height:3px;border-radius:50%;background:#15120f"></div></div><div class="a" style="left:1.5px;top:54px;width:31px;height:7.5px;background:rgba(22,23,25,0.7);border-radius:1px"><svg class="a" style="left:1px;top:0.5px" width="6.5" height="6.5" viewBox="0 0 6.5 6.5"><rect x="2.1" y="0.5" width="2.6" height="3.8" rx="1.3" fill="#fff"/><path d="M1.2 3.2a2.1 2.1 0 0 0 4.2 0M3.3 5.3v1" fill="none" stroke="#fff" stroke-width="0.7"/><path d="M0.6 6L5.9 0.7" stroke="#d9402f" stroke-width="1.0"/></svg><div class="t" style="left:8.5px;top:0.9px;font-size:5.3px;color:#f4f4f4;-webkit-text-stroke-width:0.1px">09秦海洋</div></div></div>
<div class="a" style="left:437px;top:275px;width:111px;height:63px;background:#2d3033;"><div class="a" style="left:38px;top:13.5px;width:35px;height:35px;border-radius:50%;overflow:hidden;background:#3074c8;box-shadow:0 0 0 0.8px #1c1d1f"><div class="t" style="left:0;width:35px;top:10.075px;text-align:center;font-size:13.5px;color:#fff;">皓天</div></div><div class="a" style="left:1.5px;top:54px;width:58px;height:7.5px;background:rgba(22,23,25,0.7);border-radius:1px"><svg class="a" style="left:1px;top:0.5px" width="6.5" height="6.5" viewBox="0 0 6.5 6.5"><rect x="2.1" y="0.5" width="2.6" height="3.8" rx="1.3" fill="#fff"/><path d="M1.2 3.2a2.1 2.1 0 0 0 4.2 0M3.3 5.3v1" fill="none" stroke="#fff" stroke-width="0.7"/><path d="M0.6 6L5.9 0.7" stroke="#d9402f" stroke-width="1.0"/></svg><div class="t" style="left:8.5px;top:0.9px;font-size:5.3px;color:#f4f4f4;-webkit-text-stroke-width:0.1px">交通工程0236薛皓天</div></div></div>
<div class="a" style="left:549px;top:275px;width:112px;height:63px;background:#2d3033;"><div class="a" style="left:38px;top:0;width:36px;height:63px;overflow:hidden;background:#2c2826"><div class="a" style="left:0;top:0;width:36px;height:12px;background:linear-gradient(180deg,#3e3a37,#35312e)"></div><div class="a" style="left:0;top:10px;width:23px;height:18px;border-radius:0 6px 0 0;background:#e6eef6"></div><div class="a" style="left:1px;top:12px;width:20px;height:14px;border-radius:0 5px 0 0;background:#c9dcee"></div><div class="a" style="left:0;top:26px;width:23px;height:3px;background:#4a4644"></div><div class="a" style="left:29px;top:28px;width:7px;height:28px;border-radius:3px 0 0 3px;background:#cfcac2"></div><div class="a" style="left:31px;top:32px;width:5px;height:10px;background:#4a5a70;opacity:0.6"></div><div class="a" style="left:5px;top:21px;width:25px;height:33px;border-radius:48% 48% 42% 42%;background:#e6cbb8"></div><div class="a" style="left:7px;top:18.5px;width:22px;height:6.5px;border-radius:50% 50% 25% 25%;background:#25201d"></div><div class="a" style="left:26px;top:20px;width:5px;height:12px;border-radius:40%;background:#25201d"></div><div class="a" style="left:6px;top:30px;width:10px;height:4.5px;border:0.7px solid #777;border-radius:1.5px;background:rgba(200,230,200,0.25)"></div><div class="a" style="left:17px;top:30px;width:10px;height:4.5px;border:0.7px solid #777;border-radius:1.5px;background:rgba(200,230,200,0.25)"></div><div class="a" style="left:12.5px;top:41px;width:7px;height:3px;border-radius:50%;background:#b86a60"></div><div class="a" style="left:-3px;top:51px;width:42px;height:14px;border-radius:40% 40% 0 0;background:#6a5040"></div><div class="a" style="left:10px;top:50px;width:13px;height:6px;border-radius:0 0 50% 50%;background:#dcc0ac"></div></div><div class="a" style="left:1.5px;top:54px;width:25.5px;height:7.5px;background:rgba(22,23,25,0.7);border-radius:1px"><svg class="a" style="left:1px;top:0.5px" width="6.5" height="6.5" viewBox="0 0 6.5 6.5"><rect x="2.1" y="0.5" width="2.6" height="3.8" rx="1.3" fill="#fff"/><path d="M1.2 3.2a2.1 2.1 0 0 0 4.2 0M3.3 5.3v1" fill="none" stroke="#fff" stroke-width="0.7"/><path d="M0.6 6L5.9 0.7" stroke="#d9402f" stroke-width="1.0"/></svg><div class="t" style="left:8.5px;top:0.9px;font-size:5.3px;color:#f4f4f4;-webkit-text-stroke-width:0.1px">郭德亮</div></div></div>
<div class="a" style="left:662px;top:275px;width:111.5px;height:63px;background:#2d3033;"><div class="a" style="left:38px;top:13.5px;width:35px;height:35px;border-radius:50%;overflow:hidden;background:#c9ccd6;box-shadow:0 0 0 0.8px #1c1d1f"><div class="a" style="left:0;top:0;width:35px;height:35px;background:linear-gradient(180deg,#d9dbe2 0,#c4c7d0 30%,#9da1ad 60%,#b7bac3 100%)"></div><div class="a" style="left:0;top:10px;width:35px;height:14px;background:radial-gradient(circle,#7a7f8c 0.6px,transparent 0.8px) 0 0/3px 3px;opacity:0.6"></div><div class="a" style="left:14px;top:4px;width:6px;height:6px;border-radius:50%;background:#1c1d22"></div><div class="a" style="left:9px;top:9px;width:17px;height:23px;background:#2e3038;clip-path:polygon(30% 0,70% 0,100% 85%,70% 100%,20% 100%,0 80%)"></div><div class="a" style="left:13px;top:12px;width:9px;height:18px;background:#4a4d56;clip-path:polygon(20% 0,80% 0,100% 100%,0 100%);opacity:0.6"></div></div><div class="a" style="left:1.5px;top:54px;width:31px;height:7.5px;background:rgba(22,23,25,0.7);border-radius:1px"><svg class="a" style="left:1px;top:0.5px" width="6.5" height="6.5" viewBox="0 0 6.5 6.5"><rect x="2.1" y="0.5" width="2.6" height="3.8" rx="1.3" fill="#fff"/><path d="M1.2 3.2a2.1 2.1 0 0 0 4.2 0M3.3 5.3v1" fill="none" stroke="#fff" stroke-width="0.7"/><path d="M0.6 6L5.9 0.7" stroke="#d9402f" stroke-width="1.0"/></svg><div class="t" style="left:8.5px;top:0.9px;font-size:5.3px;color:#f4f4f4;-webkit-text-stroke-width:0.1px">张诗晴07</div></div></div>
<svg class="a" style="left:325px;top:374px" width="6" height="6" viewBox="0 0 6 6"><path d="M0.5 0.5L5.5 5.5M0.5 3L3 5.5M0.5 0.5V5.5H5.5" fill="none" stroke="#888" stroke-width="0.5"/></svg>
<svg class="a" style="left:767.5px;top:374px" width="6" height="6" viewBox="0 0 6 6"><path d="M5.5 0.5L0.5 5.5M5.5 3L3 5.5M5.5 0.5V5.5H0.5" fill="none" stroke="#888" stroke-width="0.5"/></svg>
<div class="a" style="left:333.5px;top:-1px;width:132px;height:11px;background:#2a2b2e;border-radius:0 0 4px 4px;box-shadow:0 0 0 0.8px #0f0f10"></div>
<svg class="a" style="left:337px;top:2.5px" width="6" height="5" viewBox="0 0 6 5"><path d="M0.5 5.5V4M2 5.5V3M3.5 5.5V1.8M5 5.5V0.5" stroke="#eee" stroke-width="0.8"/></svg>
<div class="t" style="left:344px;top:2.6px;font-size:5px;color:#e8e8e8">您正在共享屏幕</div>
<div class="a" style="left:386px;top:2px;width:0.5px;height:6px;background:#555"></div>
<div class="t" style="left:387.5px;top:1.8px;font-size:7px;color:#fff;font-weight:bold">&#x5C43;</div>
<div class="a" style="left:399.5px;top:2px;width:0.5px;height:6px;background:#555"></div>
<svg class="a" style="left:402px;top:2px" width="6" height="6" viewBox="0 0 6 6"><path d="M0.5 2h1.5L4 0.6v4.8L2 4H0.5z" fill="#eee"/><path d="M5 1.8v2.4" stroke="#eee" stroke-width="0.6"/></svg>
<div class="t" style="left:409px;top:2.6px;font-size:5px;color:#e8e8e8">共享音频中</div>
<div class="a" style="left:438.5px;top:2px;width:0.5px;height:6px;background:#555"></div>
<div class="a" style="left:441px;top:1.8px;width:24px;height:7px;background:#e24b33;border-radius:1.5px"></div>
<div class="t" style="left:443px;top:2.8px;font-size:5px;color:#fff">结束共享</div>
<!-- green corners -->
<div class="a" style="left:0;top:0;width:50px;height:2.5px;background:#1fcc8a"></div>
<div class="a" style="left:0;top:0;width:2.5px;height:50px;background:#1fcc8a"></div>
<div class="a" style="left:750px;top:0;width:50px;height:2.5px;background:#1fcc8a"></div>
<div class="a" style="left:797.5px;top:0;width:2.5px;height:50px;background:#1fcc8a"></div>
<div class="a" style="left:0;top:447.5px;width:50px;height:2.5px;background:#1fcc8a"></div>
<div class="a" style="left:0;top:400px;width:2.5px;height:50px;background:#1fcc8a"></div>
<div class="a" style="left:750px;top:447.5px;width:50px;height:2.5px;background:#1fcc8a"></div>
<div class="a" style="left:797.5px;top:400px;width:2.5px;height:50px;background:#1fcc8a"></div>
</body></html>
